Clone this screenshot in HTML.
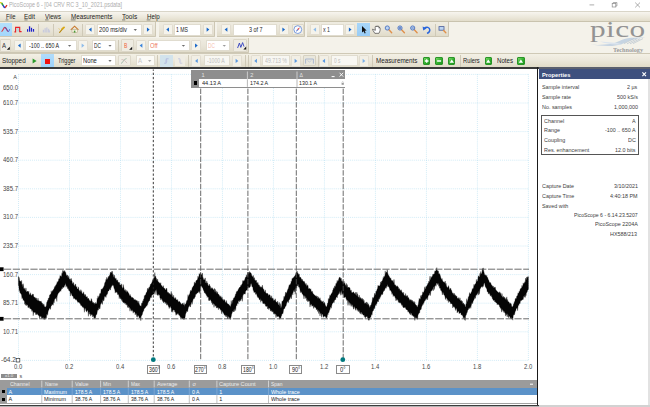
<!DOCTYPE html>
<html><head><meta charset="utf-8"><title>PicoScope 6</title>
<style>
html,body{margin:0;padding:0;background:#fff;}
#app{position:relative;width:650px;height:407px;overflow:hidden;background:#fff;font-family:"Liberation Sans",sans-serif;}
#app div,#app span,#app svg{position:absolute;display:block;white-space:pre;box-sizing:border-box;}
#app svg{overflow:visible}
</style></head><body><div id="app">
<div style="left:0.00px;top:0.00px;width:650.00px;height:10.60px;background:#ffffff;"></div>
<div style="left:0.00px;top:10.60px;width:650.00px;height:11.20px;background:linear-gradient(#f7f5ef,#ebe7da 60%,#e2ddcb);border-top:0.6px solid #d9d5c8;border-bottom:0.7px solid #c9c3ae;"></div>
<div style="left:0.00px;top:21.80px;width:650.00px;height:32.00px;background:#f4f2ea;"></div>
<div style="left:0.00px;top:53.40px;width:650.00px;height:13.80px;background:linear-gradient(#f3f0e5,#ebe7da 50%,#e0dbc8);border-top:0.7px solid #cfc9b6;"></div>
<div style="left:0.00px;top:67.40px;width:538.50px;height:1.60px;background:#3a3a3a;"></div>
<div style="left:538.50px;top:67.40px;width:111.50px;height:1.60px;background:#5a5f6e;"></div>
<div style="left:0.00px;top:21.80px;width:156.30px;height:15.50px;background:linear-gradient(#efece1,#e9e5d8 55%,#e0dbc9);border-right:0.7px solid #cdc7b4;border-bottom:0.7px solid #cdc7b4;border-radius:0 0 1.5px 0;"></div>
<div style="left:158.60px;top:21.80px;width:56.10px;height:15.50px;background:linear-gradient(#efece1,#e9e5d8 55%,#e0dbc9);border-right:0.7px solid #cdc7b4;border-bottom:0.7px solid #cdc7b4;border-radius:0 0 1.5px 0;"></div>
<div style="left:217.30px;top:21.80px;width:87.70px;height:15.50px;background:linear-gradient(#efece1,#e9e5d8 55%,#e0dbc9);border-right:0.7px solid #cdc7b4;border-bottom:0.7px solid #cdc7b4;border-radius:0 0 1.5px 0;"></div>
<div style="left:307.00px;top:21.80px;width:142.30px;height:15.50px;background:linear-gradient(#efece1,#e9e5d8 55%,#e0dbc9);border-right:0.7px solid #cdc7b4;border-bottom:0.7px solid #cdc7b4;border-radius:0 0 1.5px 0;"></div>
<div style="left:0.00px;top:38.20px;width:248.80px;height:14.80px;background:linear-gradient(#efece1,#e9e5d8 55%,#e0dbc9);border-right:0.7px solid #cdc7b4;border-bottom:0.7px solid #cdc7b4;border-radius:0 0 1.5px 0;"></div>
<svg style="left:0.00px;top:0.00px" width="650" height="407" viewBox="0 0 650 407"><path d="M0,2.9 C0.8,2.5 1.3,2.7 1.8,3.4" fill="none" stroke="#e6d21e" stroke-width="1.5"/><path d="M1.6,3.1 C2.3,3.8 2.7,4.6 3.2,5.6" fill="none" stroke="#35a030" stroke-width="1.5"/><path d="M3.0,5.2 C3.6,6.6 4.2,7.6 5.2,7.4" fill="none" stroke="#2438cc" stroke-width="1.5"/><path d="M5.0,7.5 C5.8,7.2 6.3,6.2 6.9,5.0" fill="none" stroke="#d83224" stroke-width="1.4"/></svg>
<span style='left:8.80px;top:-0.40px;font-size:6.80px;line-height:10px;color:#adadad;font-weight:400;font-family:"Liberation Sans", sans-serif;transform-origin:0 50%;transform:scaleX(0.799);'>PicoScope 6 - [04 CRV RC 3_10_2021.psdata]</span>
<svg style="left:0.00px;top:0.00px" width="650" height="407" viewBox="0 0 650 407"><g stroke="#8a8a8a" stroke-width="0.7" fill="none"><path d="M589.5,4.9 H594.2"/><rect x="612.2" y="3.4" width="3.6" height="3.6"/><path d="M613.3,3.4 V2.5 H616.9 V6 H615.8"/><path d="M635.2,2.6 L640,7.4 M640,2.6 L635.2,7.4"/></g></svg>
<span style='left:5.50px;top:11.50px;font-size:6.90px;line-height:10px;color:#1c1c1c;font-weight:400;font-family:"Liberation Sans", sans-serif;transform-origin:0 50%;transform:scaleX(0.854);'>File</span>
<span style='left:24.30px;top:11.50px;font-size:6.90px;line-height:10px;color:#1c1c1c;font-weight:400;font-family:"Liberation Sans", sans-serif;transform-origin:0 50%;transform:scaleX(0.917);'>Edit</span>
<span style='left:45.00px;top:11.50px;font-size:6.90px;line-height:10px;color:#1c1c1c;font-weight:400;font-family:"Liberation Sans", sans-serif;transform-origin:0 50%;transform:scaleX(0.875);'>Views</span>
<span style='left:70.70px;top:11.50px;font-size:6.90px;line-height:10px;color:#1c1c1c;font-weight:400;font-family:"Liberation Sans", sans-serif;transform-origin:0 50%;transform:scaleX(0.905);'>Measurements</span>
<span style='left:122.00px;top:11.50px;font-size:6.90px;line-height:10px;color:#1c1c1c;font-weight:400;font-family:"Liberation Sans", sans-serif;transform-origin:0 50%;transform:scaleX(0.944);'>Tools</span>
<span style='left:146.60px;top:11.50px;font-size:6.90px;line-height:10px;color:#1c1c1c;font-weight:400;font-family:"Liberation Sans", sans-serif;transform-origin:0 50%;transform:scaleX(0.902);'>Help</span>
<svg style="left:0.00px;top:0.00px" width="650" height="407" viewBox="0 0 650 407"><g stroke="#1c1c1c" stroke-width="0.5"><path d="M5.6,19.9 H8.4"/><path d="M24.4,19.9 H27.6"/><path d="M45.1,19.9 H48.6"/><path d="M70.8,19.9 H75.6"/><path d="M122.1,19.9 H125.3"/><path d="M146.7,19.9 H150.4"/></g></svg>
<div style="left:0.00px;top:22.60px;width:11.70px;height:13.80px;background:linear-gradient(#b4e0fc,#a2d6fb);"></div>
<svg style="left:0.00px;top:0.00px" width="650" height="407" viewBox="0 0 650 407"><path d="M1.4,31.5 C2.9,31.5 3.4,27.3 4.9,27.3 C6.4,27.3 6.9,31.4 8.3,31.4" fill="none" stroke="#e0424a" stroke-width="1.15"/><path d="M4.6,27.5 C6.5,27.3 7,31.6 8.5,31.5 C9,31.4 9.2,30.4 9.6,29.3" fill="none" stroke="#3a4ad0" stroke-width="1.0" opacity="0.85"/></svg>
<svg style="left:0.00px;top:0.00px" width="650" height="407" viewBox="0 0 650 407"><path d="M14.4,31.8 H15.6 V27.4 H19.7 V31.6 H21.6" fill="none" stroke="#e8222a" stroke-width="1.15"/><path d="M17,31.6 V28.6 H18.4 V31.6" fill="none" stroke="#9ad0e0" stroke-width="0.7"/></svg>
<svg style="left:0.00px;top:0.00px" width="650" height="407" viewBox="0 0 650 407"><g fill="#1c20cc"><rect x="27" y="29.2" width="1.1" height="2.5"/><rect x="28.9" y="26.3" width="1.3" height="5.4"/><rect x="30.9" y="27.8" width="1.2" height="3.9"/><rect x="32.9" y="29" width="1.2" height="2.7"/></g></svg>
<div style="left:37.60px;top:23.50px;width:0.80px;height:12.50px;background:#cfc9b7;"></div>
<svg style="left:0.00px;top:0.00px" width="650" height="407" viewBox="0 0 650 407"><g fill="#c9cbdc"><rect x="42.8" y="29.8" width="1.3" height="2.7"/><rect x="44.5" y="28.2" width="1.3" height="4.3"/><rect x="46.2" y="27.4" width="1.3" height="5.1"/><rect x="47.9" y="28.8" width="1.3" height="3.7"/><rect x="49" y="30.4" width="1.1" height="2.1"/></g></svg>
<div style="left:53.20px;top:23.50px;width:0.80px;height:12.50px;background:#cfc9b7;"></div>
<svg style="left:0.00px;top:0.00px" width="650" height="407" viewBox="0 0 650 407"><path d="M59.6,32.4 L62.6,28.8" stroke="#b8860a" stroke-width="1.1" stroke-linecap="round"/><path d="M62.2,29 L64,27.4" stroke="#d8a818" stroke-width="1.9" stroke-linecap="round"/><path d="M58.6,28.6 L59.8,29.4" stroke="#e0b020" stroke-width="0.6"/></svg>
<svg style="left:0.00px;top:0.00px" width="650" height="407" viewBox="0 0 650 407"><path d="M70.8,29.8 L74.6,26.2 L78.4,29.8" fill="none" stroke="#c8782a" stroke-width="1.1"/><rect x="72" y="29.4" width="5.2" height="3.2" fill="#fbf6e6" stroke="#a89a70" stroke-width="0.5"/><rect x="73.8" y="30.6" width="1.6" height="2" fill="#4a9a3a"/></svg>
<div style="left:81.60px;top:23.50px;width:0.80px;height:12.50px;background:#cfc9b7;"></div>
<div style="left:85.10px;top:23.85px;width:10.20px;height:11.50px;background:#f5f3eb;border:0.5px solid #e2ddd0;border-radius:1.2px;"></div>
<svg style="left:0.00px;top:0.00px" width="650" height="407" viewBox="0 0 650 407"><polygon points="91.55,27.5 91.55,31.700000000000003 88.85000000000001,29.6" fill="#1565c8"/></svg>
<div style="left:96.80px;top:24.00px;width:45.00px;height:11.60px;background:#ffffff;border:0.5px solid #e0dccf;"></div>
<svg style="left:0.00px;top:0.00px" width="650" height="407" viewBox="0 0 650 407"><polygon points="133.65,29.1 136.95000000000002,29.1 135.3,30.9" fill="#6e6e6e"/></svg>
<span style='left:99.00px;top:24.60px;font-size:6.60px;line-height:10px;color:#222;font-weight:400;font-family:"Liberation Sans", sans-serif;transform-origin:0 50%;transform:scaleX(0.877);'>200 ms/div</span>
<div style="left:143.20px;top:23.85px;width:10.20px;height:11.50px;background:#f5f3eb;border:0.5px solid #e2ddd0;border-radius:1.2px;"></div>
<svg style="left:0.00px;top:0.00px" width="650" height="407" viewBox="0 0 650 407"><polygon points="146.95000000000002,27.5 146.95000000000002,31.700000000000003 149.65,29.6" fill="#1565c8"/></svg>
<div style="left:162.50px;top:23.85px;width:10.20px;height:11.50px;background:#f5f3eb;border:0.5px solid #e2ddd0;border-radius:1.2px;"></div>
<svg style="left:0.00px;top:0.00px" width="650" height="407" viewBox="0 0 650 407"><polygon points="168.95,27.5 168.95,31.700000000000003 166.25,29.6" fill="#1565c8"/></svg>
<div style="left:173.80px;top:24.00px;width:27.50px;height:11.60px;background:#ffffff;border:0.5px solid #e0dccf;"></div>
<span style='left:176.00px;top:24.60px;font-size:6.60px;line-height:10px;color:#222;font-weight:400;font-family:"Liberation Sans", sans-serif;transform-origin:0 50%;transform:scaleX(0.779);'>1 MS</span>
<div style="left:202.90px;top:23.85px;width:10.20px;height:11.50px;background:#f5f3eb;border:0.5px solid #e2ddd0;border-radius:1.2px;"></div>
<svg style="left:0.00px;top:0.00px" width="650" height="407" viewBox="0 0 650 407"><polygon points="206.65,27.5 206.65,31.700000000000003 209.35,29.6" fill="#1565c8"/></svg>
<div style="left:220.90px;top:23.85px;width:10.20px;height:11.50px;background:#f5f3eb;border:0.5px solid #e2ddd0;border-radius:1.2px;"></div>
<svg style="left:0.00px;top:0.00px" width="650" height="407" viewBox="0 0 650 407"><polygon points="227.35,27.5 227.35,31.700000000000003 224.65,29.6" fill="#1565c8"/></svg>
<div style="left:232.80px;top:24.00px;width:44.50px;height:11.60px;background:#ffffff;border:0.5px solid #e0dccf;"></div>
<span style='left:248.50px;top:24.60px;font-size:6.60px;line-height:10px;color:#222;font-weight:400;font-family:"Liberation Sans", sans-serif;transform-origin:0 50%;transform:scaleX(0.818);'>3 of 7</span>
<div style="left:278.60px;top:23.85px;width:10.20px;height:11.50px;background:#f5f3eb;border:0.5px solid #e2ddd0;border-radius:1.2px;"></div>
<svg style="left:0.00px;top:0.00px" width="650" height="407" viewBox="0 0 650 407"><polygon points="282.34999999999997,27.5 282.34999999999997,31.700000000000003 285.05,29.6" fill="#1565c8"/></svg>
<div style="left:291.60px;top:23.80px;width:12.00px;height:11.60px;background:#f1eee4;border:0.6px solid #dcd7c8;border-radius:1px;"></div>
<svg style="left:0.00px;top:0.00px" width="650" height="407" viewBox="0 0 650 407"><circle cx="297.8" cy="29.6" r="3.9" fill="#fdfdfd" stroke="#5a86d8" stroke-width="0.8"/><path d="M295.6,31.9 L297.3,29.0 L298.4,30.1 Z" fill="#4a6ad0"/><path d="M300.1,27.2 L297.3,29.0 L298.4,30.1 Z" fill="#e03030"/></svg>
<div style="left:309.60px;top:23.85px;width:10.20px;height:11.50px;background:#f5f3eb;border:0.5px solid #e2ddd0;border-radius:1.2px;"></div>
<svg style="left:0.00px;top:0.00px" width="650" height="407" viewBox="0 0 650 407"><polygon points="316.05,27.5 316.05,31.700000000000003 313.34999999999997,29.6" fill="#8fbdea"/></svg>
<div style="left:320.80px;top:24.00px;width:23.20px;height:11.60px;background:#ffffff;border:0.5px solid #e0dccf;"></div>
<span style='left:323.00px;top:24.60px;font-size:6.60px;line-height:10px;color:#333;font-weight:400;font-family:"Liberation Sans", sans-serif;transform-origin:0 50%;transform:scaleX(0.795);'>x 1</span>
<div style="left:345.10px;top:23.85px;width:10.20px;height:11.50px;background:#f5f3eb;border:0.5px solid #e2ddd0;border-radius:1.2px;"></div>
<svg style="left:0.00px;top:0.00px" width="650" height="407" viewBox="0 0 650 407"><polygon points="348.84999999999997,27.5 348.84999999999997,31.700000000000003 351.55,29.6" fill="#1565c8"/></svg>
<div style="left:357.30px;top:23.00px;width:12.70px;height:13.40px;background:linear-gradient(#a8d6f8,#98ccf6);"></div>
<svg style="left:0.00px;top:0.00px" width="650" height="407" viewBox="0 0 650 407"><path d="M362,26 L362,32.6 L363.6,31.2 L364.7,33.6 L365.7,33.1 L364.6,30.8 L366.6,30.6 Z" fill="#111"/></svg>
<svg style="left:0.00px;top:0.00px" width="650" height="407" viewBox="0 0 650 407"><path transform="translate(376.4 29.8) scale(0.88) translate(-376.4 -29.6)" d="M373.3,29.4 C372.2,28.2 371.4,28.8 372.6,30.4 L374.6,33.6 L379.2,33.6 C380.6,31.4 380.8,29.6 380.6,27.6 C380.4,26.6 379.4,26.8 379.4,27.8 L379.3,26.2 C379.1,25.2 378,25.4 378,26.4 L377.8,25.6 C377.5,24.6 376.4,24.9 376.5,26 L376.3,26.4 C376,25.3 374.8,25.6 375,26.8 L375.2,30.2 Z" fill="#fff" stroke="#222" stroke-width="0.65"/></svg>
<svg style="left:0.00px;top:0.00px" width="650" height="407" viewBox="0 0 650 407"><path d="M388.7,29.6 L391.7,32.8" stroke="#e0904a" stroke-width="1.4" stroke-linecap="round"/><circle cx="387.3" cy="28.0" r="2.1" fill="#bcd4f2" stroke="#4a72c0" stroke-width="0.9"/><path d="M401.4,29.6 L404.4,32.8" stroke="#e0904a" stroke-width="1.4" stroke-linecap="round"/><circle cx="400.0" cy="28.0" r="2.1" fill="#bcd4f2" stroke="#4a72c0" stroke-width="0.9"/><path d="M398.9,28.0 H401.1" stroke="#2a4aa0" stroke-width="0.6"/><path d="M400.0,26.9 V29.1" stroke="#2a4aa0" stroke-width="0.6"/><path d="M414.09999999999997,29.6 L417.09999999999997,32.8" stroke="#e0904a" stroke-width="1.4" stroke-linecap="round"/><circle cx="412.7" cy="28.0" r="2.1" fill="#bcd4f2" stroke="#4a72c0" stroke-width="0.9"/><path d="M411.59999999999997,28.0 H413.8" stroke="#2a4aa0" stroke-width="0.6"/></svg>
<svg style="left:0.00px;top:0.00px" width="650" height="407" viewBox="0 0 650 407"><path d="M424.4,28.4 C426.4,26.4 429.8,27.2 429.8,30 C429.8,31.8 428.6,32.8 427,33.4" fill="none" stroke="#2a66dc" stroke-width="1.5"/><path d="M422.6,26.4 L423.2,30.6 L426.6,28.6 Z" fill="#2a66dc"/></svg>
<div style="left:434.80px;top:23.50px;width:0.80px;height:12.50px;background:#cfc9b7;"></div>
<svg style="left:0.00px;top:0.00px" width="650" height="407" viewBox="0 0 650 407"><rect x="439" y="26.6" width="5" height="3.6" fill="#bcd4f2" stroke="#4a5e98" stroke-width="0.8"/><path d="M443.6,30.6 L445.8,32.8" stroke="#e0904a" stroke-width="1.4" stroke-linecap="round"/></svg>
<span style='left:590.30px;top:24.60px;font-size:23.00px;line-height:10px;color:#939393;font-weight:400;font-family:"Liberation Serif", serif;transform-origin:0 50%;transform:scaleX(1.360);letter-spacing:0.3px;'>pico</span>
<svg style="left:0.00px;top:0.00px" width="650" height="407" viewBox="0 0 650 407"><path d="M590,44.6 C602,45.4 612,44.6 620,40.8 C627,37.6 634,37.4 645.5,37.6 C636,38.6 630,40.2 624.5,43 C616,47 604,46.6 590,44.6 Z" fill="#c6d4e2"/><path d="M600,41.6 C608,42.2 616,42.6 622,44.2 C614,45.2 606,43.8 600,41.6 Z" fill="#dbe4ee"/><path d="M624,43.6 L634,38.6 M627,43.8 L637,38.8 M630,43.8 L640,38.8 M633,43.6 L643,38.6" stroke="#b9c4d0" stroke-width="0.7"/></svg>
<span style='left:613.00px;top:44.50px;font-size:5.60px;line-height:10px;color:#9a9a9a;font-weight:700;font-family:"Liberation Serif", serif;transform-origin:0 50%;transform:scaleX(1.104);'>Technology</span>
<div style="left:0.40px;top:39.20px;width:10.80px;height:12.40px;background:#efece2;border:0.6px solid #dcd7c8;border-radius:1px;"></div>
<span style='left:2.00px;top:40.60px;font-size:6.60px;line-height:10px;color:#333;font-weight:400;font-family:"Liberation Sans", sans-serif;transform-origin:0 50%;transform:scaleX(0.920);'>A</span>
<svg style="left:0.00px;top:0.00px" width="650" height="407" viewBox="0 0 650 407"><path d="M9.8,46.8 V49.8 H6.8 Z" fill="#111"/></svg>
<div style="left:14.20px;top:39.85px;width:10.20px;height:11.50px;background:#f5f3eb;border:0.5px solid #e2ddd0;border-radius:1.2px;"></div>
<svg style="left:0.00px;top:0.00px" width="650" height="407" viewBox="0 0 650 407"><polygon points="20.650000000000002,43.5 20.650000000000002,47.7 17.95,45.6" fill="#1565c8"/></svg>
<div style="left:25.40px;top:40.00px;width:51.80px;height:11.20px;background:#ffffff;border:0.5px solid #e0dccf;"></div>
<svg style="left:0.00px;top:0.00px" width="650" height="407" viewBox="0 0 650 407"><polygon points="67.94999999999999,44.900000000000006 71.25,44.900000000000006 69.6,46.7" fill="#6e6e6e"/></svg>
<span style='left:28.60px;top:40.60px;font-size:6.60px;line-height:10px;color:#222;font-weight:400;font-family:"Liberation Sans", sans-serif;transform-origin:0 50%;transform:scaleX(0.804);'>-100 .. 650 A</span>
<div style="left:77.90px;top:39.85px;width:10.20px;height:11.50px;background:#f5f3eb;border:0.5px solid #e2ddd0;border-radius:1.2px;"></div>
<svg style="left:0.00px;top:0.00px" width="650" height="407" viewBox="0 0 650 407"><polygon points="81.65,43.5 81.65,47.7 84.35,45.6" fill="#8fbdea"/></svg>
<div style="left:91.60px;top:40.00px;width:24.40px;height:11.20px;background:#ffffff;border:0.5px solid #e0dccf;"></div>
<svg style="left:0.00px;top:0.00px" width="650" height="407" viewBox="0 0 650 407"><polygon points="108.35,44.900000000000006 111.65,44.900000000000006 110,46.7" fill="#6e6e6e"/></svg>
<span style='left:93.90px;top:40.60px;font-size:6.60px;line-height:10px;color:#222;font-weight:400;font-family:"Liberation Sans", sans-serif;transform-origin:0 50%;transform:scaleX(0.720);'>DC</span>
<div style="left:118.40px;top:39.50px;width:0.80px;height:12.50px;background:#cfc9b7;"></div>
<div style="left:120.60px;top:39.20px;width:13.00px;height:12.40px;background:#efece2;border:0.6px solid #dcd7c8;border-radius:1px;"></div>
<span style='left:124.00px;top:40.60px;font-size:6.40px;line-height:10px;color:#f08c6c;font-weight:700;font-family:"Liberation Sans", sans-serif;transform-origin:0 50%;transform:scaleX(0.720);'>B</span>
<svg style="left:0.00px;top:0.00px" width="650" height="407" viewBox="0 0 650 407"><path d="M132.2,46.8 V49.8 H129.2 Z" fill="#111"/></svg>
<div style="left:135.90px;top:39.85px;width:10.20px;height:11.50px;background:#f5f3eb;border:0.5px solid #e2ddd0;border-radius:1.2px;"></div>
<svg style="left:0.00px;top:0.00px" width="650" height="407" viewBox="0 0 650 407"><polygon points="142.35,43.5 142.35,47.7 139.65,45.6" fill="#3a84dc"/></svg>
<div style="left:147.60px;top:40.00px;width:42.20px;height:11.20px;background:#ffffff;border:0.5px solid #e0dccf;"></div>
<svg style="left:0.00px;top:0.00px" width="650" height="407" viewBox="0 0 650 407"><polygon points="181.75,44.900000000000006 185.05,44.900000000000006 183.4,46.7" fill="#6e6e6e"/></svg>
<span style='left:150.20px;top:40.60px;font-size:6.60px;line-height:10px;color:#ee7a5c;font-weight:400;font-family:"Liberation Sans", sans-serif;transform-origin:0 50%;transform:scaleX(0.875);'>Off</span>
<div style="left:191.30px;top:39.85px;width:10.20px;height:11.50px;background:#f5f3eb;border:0.5px solid #e2ddd0;border-radius:1.2px;"></div>
<svg style="left:0.00px;top:0.00px" width="650" height="407" viewBox="0 0 650 407"><polygon points="195.05,43.5 195.05,47.7 197.75,45.6" fill="#1565c8"/></svg>
<div style="left:206.20px;top:40.00px;width:24.20px;height:11.20px;background:#ffffff;border:0.5px solid #e0dccf;"></div>
<svg style="left:0.00px;top:0.00px" width="650" height="407" viewBox="0 0 650 407"><polygon points="222.65,44.900000000000006 225.95000000000002,44.900000000000006 224.3,46.7" fill="#9a9a9a"/></svg>
<span style='left:208.00px;top:40.60px;font-size:6.60px;line-height:10px;color:#f5c0b0;font-weight:400;font-family:"Liberation Sans", sans-serif;transform-origin:0 50%;transform:scaleX(0.720);'>DC</span>
<div style="left:233.30px;top:39.20px;width:14.20px;height:12.40px;background:#efece2;border:0.6px solid #dcd7c8;border-radius:1px;"></div>
<svg style="left:0.00px;top:0.00px" width="650" height="407" viewBox="0 0 650 407"><path d="M237.6,48 L239.4,43 L240.8,47.4 L242.6,42.6 L244,46.6" fill="none" stroke="#3040c0" stroke-width="0.9"/><path d="M246.2,46.6 V49.4 H243.4 Z" fill="#111"/></svg>
<span style='left:1.70px;top:55.90px;font-size:6.60px;line-height:10px;color:#222;font-weight:400;font-family:"Liberation Sans", sans-serif;transform-origin:0 50%;transform:scaleX(0.964);'>Stopped</span>
<svg style="left:0.00px;top:0.00px" width="650" height="407" viewBox="0 0 650 407"><polygon points="32.6,58.4 32.6,63.6 36.6,61" fill="#2a9a2a"/></svg>
<div style="left:40.60px;top:54.20px;width:13.40px;height:12.90px;background:linear-gradient(#b0dcfb,#9ed2fa);"></div>
<div style="left:44.60px;top:58.50px;width:5.00px;height:5.00px;background:#f01010;"></div>
<span style='left:57.50px;top:55.90px;font-size:6.60px;line-height:10px;color:#222;font-weight:400;font-family:"Liberation Sans", sans-serif;transform-origin:0 50%;transform:scaleX(0.847);'>Trigger</span>
<div style="left:80.60px;top:55.20px;width:35.40px;height:11.20px;background:#ffffff;border:0.5px solid #e0dccf;"></div>
<svg style="left:0.00px;top:0.00px" width="650" height="407" viewBox="0 0 650 407"><polygon points="108.35,60.10000000000001 111.65,60.10000000000001 110,61.900000000000006" fill="#6e6e6e"/></svg>
<span style='left:82.60px;top:55.90px;font-size:6.60px;line-height:10px;color:#222;font-weight:400;font-family:"Liberation Sans", sans-serif;transform-origin:0 50%;transform:scaleX(0.875);'>None</span>
<div style="left:118.20px;top:55.20px;width:12.40px;height:11.20px;background:#f0ede4;border:0.5px solid #ddd8ca;border-radius:1px;"></div>
<svg style="left:0.00px;top:0.00px" width="650" height="407" viewBox="0 0 650 407"><path d="M121,63.4 C123,63.4 123.4,58.6 126.6,58.6" fill="none" stroke="#a0b8a8" stroke-width="0.9"/><path d="M121.4,59.6 C123.6,59.2 125.4,61 127,63.2" fill="none" stroke="#c8b0b0" stroke-width="0.7"/></svg>
<div style="left:135.80px;top:55.20px;width:18.80px;height:11.20px;background:#fbfaf6;border:0.5px solid #e0dccf;"></div>
<svg style="left:0.00px;top:0.00px" width="650" height="407" viewBox="0 0 650 407"><polygon points="148.04999999999998,60.10000000000001 151.35,60.10000000000001 149.7,61.900000000000006" fill="#aaa"/></svg>
<span style='left:138.20px;top:55.90px;font-size:6.60px;line-height:10px;color:#c8c8c8;font-weight:400;font-family:"Liberation Sans", sans-serif;transform-origin:0 50%;transform:scaleX(0.920);'>A</span>
<div style="left:157.00px;top:55.00px;width:0.80px;height:11.50px;background:#cfc9b7;"></div>
<div style="left:159.80px;top:54.80px;width:13.20px;height:12.00px;background:#d2e3ec;"></div>
<svg style="left:0.00px;top:0.00px" width="650" height="407" viewBox="0 0 650 407"><path d="M164.2,63.2 H166.2 V58.8 H168.6" fill="none" stroke="#a9aedc" stroke-width="0.7"/><path d="M165.2,61 H167.4" stroke="#b4b8e0" stroke-width="0.5"/></svg>
<div style="left:174.60px;top:55.20px;width:10.60px;height:11.20px;background:#efece3;"></div>
<svg style="left:0.00px;top:0.00px" width="650" height="407" viewBox="0 0 650 407"><path d="M178,58.8 H180 V63.2 H182.4" fill="none" stroke="#bcc0dc" stroke-width="0.7"/><path d="M179,61 H181.2" stroke="#c4c8e0" stroke-width="0.5"/></svg>
<div style="left:187.50px;top:55.00px;width:0.80px;height:11.50px;background:#cfc9b7;"></div>
<div style="left:191.30px;top:55.15px;width:10.20px;height:11.50px;background:#f2efe5;border:0.5px solid #e2ddd0;border-radius:1.2px;"></div>
<svg style="left:0.00px;top:0.00px" width="650" height="407" viewBox="0 0 650 407"><polygon points="197.75,58.8 197.75,63.0 195.05,60.9" fill="#5a98e0"/></svg>
<div style="left:203.60px;top:55.20px;width:26.70px;height:11.20px;background:#f8f7f2;border:0.5px solid #e0dccf;"></div>
<span style='left:206.70px;top:55.90px;font-size:6.60px;line-height:10px;color:#bdbdbd;font-weight:400;font-family:"Liberation Sans", sans-serif;transform-origin:0 50%;transform:scaleX(0.774);'>-1000 A</span>
<div style="left:231.90px;top:55.15px;width:10.20px;height:11.50px;background:#f2efe5;border:0.5px solid #e2ddd0;border-radius:1.2px;"></div>
<svg style="left:0.00px;top:0.00px" width="650" height="407" viewBox="0 0 650 407"><polygon points="235.65,58.8 235.65,63.0 238.35,60.9" fill="#5a98e0"/></svg>
<div style="left:245.00px;top:55.00px;width:0.80px;height:11.50px;background:#cfc9b7;"></div>
<div style="left:248.20px;top:55.00px;width:0.80px;height:11.50px;background:#cfc9b7;"></div>
<div style="left:250.50px;top:55.15px;width:10.20px;height:11.50px;background:#f2efe5;border:0.5px solid #e2ddd0;border-radius:1.2px;"></div>
<svg style="left:0.00px;top:0.00px" width="650" height="407" viewBox="0 0 650 407"><polygon points="256.95,58.8 256.95,63.0 254.25,60.9" fill="#5a98e0"/></svg>
<div style="left:262.30px;top:55.20px;width:27.50px;height:11.20px;background:#f8f7f2;border:0.5px solid #e0dccf;"></div>
<span style='left:265.40px;top:55.90px;font-size:6.60px;line-height:10px;color:#bdbdbd;font-weight:400;font-family:"Liberation Sans", sans-serif;transform-origin:0 50%;transform:scaleX(0.789);'>49.713 %</span>
<div style="left:290.90px;top:55.15px;width:10.20px;height:11.50px;background:#f2efe5;border:0.5px solid #e2ddd0;border-radius:1.2px;"></div>
<svg style="left:0.00px;top:0.00px" width="650" height="407" viewBox="0 0 650 407"><polygon points="294.65,58.8 294.65,63.0 297.35,60.9" fill="#5a98e0"/></svg>
<div style="left:302.80px;top:55.20px;width:13.60px;height:11.20px;background:#e9e7dc;border:0.6px solid #d6d1c1;border-radius:1px;"></div>
<svg style="left:0.00px;top:0.00px" width="650" height="407" viewBox="0 0 650 407"><path d="M305.6,63.6 V59 H313.4 V63.6" fill="none" stroke="#9aaccc" stroke-width="0.8"/><path d="M307.4,60.6 L309.6,62 L311.6,60.2" fill="none" stroke="#b0bcd4" stroke-width="0.6"/></svg>
<div style="left:318.20px;top:55.00px;width:0.80px;height:11.50px;background:#cfc9b7;"></div>
<div style="left:318.60px;top:55.15px;width:10.20px;height:11.50px;background:#f2efe5;border:0.5px solid #e2ddd0;border-radius:1.2px;"></div>
<svg style="left:0.00px;top:0.00px" width="650" height="407" viewBox="0 0 650 407"><polygon points="325.05,58.8 325.05,63.0 322.34999999999997,60.9" fill="#5a98e0"/></svg>
<div style="left:330.60px;top:55.20px;width:27.60px;height:11.20px;background:#f8f7f2;border:0.5px solid #e0dccf;"></div>
<span style='left:333.80px;top:55.90px;font-size:6.60px;line-height:10px;color:#bdbdbd;font-weight:400;font-family:"Liberation Sans", sans-serif;transform-origin:0 50%;transform:scaleX(0.720);'>0 s</span>
<div style="left:358.90px;top:55.15px;width:10.20px;height:11.50px;background:#f2efe5;border:0.5px solid #e2ddd0;border-radius:1.2px;"></div>
<svg style="left:0.00px;top:0.00px" width="650" height="407" viewBox="0 0 650 407"><polygon points="362.65,58.8 362.65,63.0 365.35,60.9" fill="#7ab0e8"/></svg>
<div style="left:372.00px;top:55.00px;width:0.80px;height:11.50px;background:#cfc9b7;"></div>
<span style='left:376.40px;top:55.90px;font-size:6.60px;line-height:10px;color:#222;font-weight:400;font-family:"Liberation Sans", sans-serif;transform-origin:0 50%;transform:scaleX(0.951);'>Measurements</span>
<div style="left:423.00px;top:57.40px;width:7.40px;height:7.20px;background:linear-gradient(135deg,#7ad868,#2fae2c 55%,#1f9420);border:0.5px solid #2a9428;border-radius:1px;"></div>
<svg style="left:0.00px;top:0.00px" width="650" height="407" viewBox="0 0 650 407"><path d="M424.9,61.0 H428.5 M426.7,59.199999999999996 V62.8" stroke="#fff" stroke-width="1.3"/></svg>
<div style="left:435.40px;top:57.40px;width:7.40px;height:7.20px;background:linear-gradient(135deg,#7ad868,#2fae2c 55%,#1f9420);border:0.5px solid #2a9428;border-radius:1px;"></div>
<svg style="left:0.00px;top:0.00px" width="650" height="407" viewBox="0 0 650 407"><path d="M437.09999999999997,61.0 H441.09999999999997" stroke="#fff" stroke-width="1.5"/></svg>
<div style="left:448.10px;top:57.40px;width:7.40px;height:7.20px;background:linear-gradient(135deg,#7ad868,#2fae2c 55%,#1f9420);border:0.5px solid #2a9428;border-radius:1px;"></div>
<svg style="left:0.00px;top:0.00px" width="650" height="407" viewBox="0 0 650 407"><path d="M449.6,62.8 L451.8,59.4 L454.0,62.8 Z" fill="#fff"/></svg>
<div style="left:459.60px;top:55.00px;width:0.80px;height:11.50px;background:#cfc9b7;"></div>
<span style='left:462.70px;top:55.90px;font-size:6.60px;line-height:10px;color:#222;font-weight:400;font-family:"Liberation Sans", sans-serif;transform-origin:0 50%;transform:scaleX(0.876);'>Rulers</span>
<div style="left:484.60px;top:57.40px;width:7.40px;height:7.20px;background:linear-gradient(135deg,#7ad868,#2fae2c 55%,#1f9420);border:0.5px solid #2a9428;border-radius:1px;"></div>
<svg style="left:0.00px;top:0.00px" width="650" height="407" viewBox="0 0 650 407"><path d="M486.1,62.8 L488.3,59.4 L490.5,62.8 Z" fill="#fff"/></svg>
<span style='left:497.40px;top:55.90px;font-size:6.60px;line-height:10px;color:#222;font-weight:400;font-family:"Liberation Sans", sans-serif;transform-origin:0 50%;transform:scaleX(0.928);'>Notes</span>
<div style="left:517.20px;top:57.40px;width:7.40px;height:7.20px;background:linear-gradient(135deg,#7ad868,#2fae2c 55%,#1f9420);border:0.5px solid #2a9428;border-radius:1px;"></div>
<svg style="left:0.00px;top:0.00px" width="650" height="407" viewBox="0 0 650 407"><path d="M518.7,62.8 L520.9000000000001,59.4 L523.1,62.8 Z" fill="#fff"/></svg>
<div style="left:0.00px;top:69.00px;width:537.00px;height:335.60px;background:#ffffff;"></div>
<div style="left:536.70px;top:67.40px;width:1.80px;height:338.60px;background:#1a1a1a;"></div>
<svg style="left:0.00px;top:0.00px" width="650" height="407" viewBox="0 0 650 407"><g stroke="#a6d8ee" stroke-width="0.6" stroke-dasharray="0.8 1.15" fill="none"><path d="M18.50,74.4 V360.4"/><path d="M18.5,74.40 H528.4"/><path d="M69.49,74.4 V360.4"/><path d="M18.5,103.00 H528.4"/><path d="M120.48,74.4 V360.4"/><path d="M18.5,131.60 H528.4"/><path d="M171.47,74.4 V360.4"/><path d="M18.5,160.20 H528.4"/><path d="M222.46,74.4 V360.4"/><path d="M18.5,188.80 H528.4"/><path d="M273.45,74.4 V360.4"/><path d="M18.5,217.40 H528.4"/><path d="M324.44,74.4 V360.4"/><path d="M18.5,246.00 H528.4"/><path d="M375.43,74.4 V360.4"/><path d="M18.5,274.60 H528.4"/><path d="M426.42,74.4 V360.4"/><path d="M18.5,303.20 H528.4"/><path d="M477.41,74.4 V360.4"/><path d="M18.5,331.80 H528.4"/><path d="M528.40,74.4 V360.4"/><path d="M18.5,360.40 H528.4"/></g></svg>
<span style='left:3.20px;top:83.00px;font-size:6.50px;line-height:10px;color:#474747;font-weight:400;font-family:"Liberation Sans", sans-serif;transform-origin:0 50%;transform:scaleX(0.922);'>650.0</span>
<span style='left:3.20px;top:98.00px;font-size:6.50px;line-height:10px;color:#474747;font-weight:400;font-family:"Liberation Sans", sans-serif;transform-origin:0 50%;transform:scaleX(0.922);'>610.7</span>
<span style='left:3.20px;top:126.60px;font-size:6.50px;line-height:10px;color:#474747;font-weight:400;font-family:"Liberation Sans", sans-serif;transform-origin:0 50%;transform:scaleX(0.922);'>535.7</span>
<span style='left:3.20px;top:155.20px;font-size:6.50px;line-height:10px;color:#474747;font-weight:400;font-family:"Liberation Sans", sans-serif;transform-origin:0 50%;transform:scaleX(0.922);'>460.7</span>
<span style='left:3.20px;top:183.80px;font-size:6.50px;line-height:10px;color:#474747;font-weight:400;font-family:"Liberation Sans", sans-serif;transform-origin:0 50%;transform:scaleX(0.922);'>385.7</span>
<span style='left:3.20px;top:212.40px;font-size:6.50px;line-height:10px;color:#474747;font-weight:400;font-family:"Liberation Sans", sans-serif;transform-origin:0 50%;transform:scaleX(0.922);'>310.7</span>
<span style='left:3.20px;top:241.00px;font-size:6.50px;line-height:10px;color:#474747;font-weight:400;font-family:"Liberation Sans", sans-serif;transform-origin:0 50%;transform:scaleX(0.922);'>235.7</span>
<span style='left:3.20px;top:269.50px;font-size:6.50px;line-height:10px;color:#474747;font-weight:400;font-family:"Liberation Sans", sans-serif;transform-origin:0 50%;transform:scaleX(0.922);'>160.7</span>
<span style='left:3.20px;top:298.20px;font-size:6.50px;line-height:10px;color:#474747;font-weight:400;font-family:"Liberation Sans", sans-serif;transform-origin:0 50%;transform:scaleX(0.922);'>85.71</span>
<span style='left:3.20px;top:326.80px;font-size:6.50px;line-height:10px;color:#474747;font-weight:400;font-family:"Liberation Sans", sans-serif;transform-origin:0 50%;transform:scaleX(0.922);'>10.71</span>
<span style='left:0.80px;top:355.40px;font-size:6.50px;line-height:10px;color:#474747;font-weight:400;font-family:"Liberation Sans", sans-serif;transform-origin:0 50%;transform:scaleX(1.012);'>-64.2</span>
<svg style="left:0.00px;top:0.00px" width="650" height="407" viewBox="0 0 650 407"><rect x="16.2" y="358.6" width="3.6" height="3.4" fill="#fff" stroke="#333" stroke-width="0.7"/></svg>
<span style='left:13.13px;top:71.60px;font-size:5.60px;line-height:10px;color:#474747;font-weight:400;font-family:"Liberation Sans", sans-serif;'>A</span>
<span style='left:14.43px;top:362.20px;font-size:6.50px;line-height:10px;color:#474747;font-weight:400;font-family:"Liberation Sans", sans-serif;transform-origin:0 50%;transform:scaleX(0.900);'>0.0</span>
<span style='left:65.42px;top:362.20px;font-size:6.50px;line-height:10px;color:#474747;font-weight:400;font-family:"Liberation Sans", sans-serif;transform-origin:0 50%;transform:scaleX(0.900);'>0.2</span>
<span style='left:116.41px;top:362.20px;font-size:6.50px;line-height:10px;color:#474747;font-weight:400;font-family:"Liberation Sans", sans-serif;transform-origin:0 50%;transform:scaleX(0.900);'>0.4</span>
<span style='left:167.40px;top:362.20px;font-size:6.50px;line-height:10px;color:#474747;font-weight:400;font-family:"Liberation Sans", sans-serif;transform-origin:0 50%;transform:scaleX(0.900);'>0.6</span>
<span style='left:218.39px;top:362.20px;font-size:6.50px;line-height:10px;color:#474747;font-weight:400;font-family:"Liberation Sans", sans-serif;transform-origin:0 50%;transform:scaleX(0.900);'>0.8</span>
<span style='left:269.38px;top:362.20px;font-size:6.50px;line-height:10px;color:#474747;font-weight:400;font-family:"Liberation Sans", sans-serif;transform-origin:0 50%;transform:scaleX(0.900);'>1.0</span>
<span style='left:320.37px;top:362.20px;font-size:6.50px;line-height:10px;color:#474747;font-weight:400;font-family:"Liberation Sans", sans-serif;transform-origin:0 50%;transform:scaleX(0.900);'>1.2</span>
<span style='left:371.36px;top:362.20px;font-size:6.50px;line-height:10px;color:#474747;font-weight:400;font-family:"Liberation Sans", sans-serif;transform-origin:0 50%;transform:scaleX(0.900);'>1.4</span>
<span style='left:422.35px;top:362.20px;font-size:6.50px;line-height:10px;color:#474747;font-weight:400;font-family:"Liberation Sans", sans-serif;transform-origin:0 50%;transform:scaleX(0.900);'>1.6</span>
<span style='left:473.34px;top:362.20px;font-size:6.50px;line-height:10px;color:#474747;font-weight:400;font-family:"Liberation Sans", sans-serif;transform-origin:0 50%;transform:scaleX(0.900);'>1.8</span>
<span style='left:523.83px;top:362.20px;font-size:6.50px;line-height:10px;color:#474747;font-weight:400;font-family:"Liberation Sans", sans-serif;transform-origin:0 50%;transform:scaleX(0.900);'>2.0</span>
<div style="left:1.00px;top:373.80px;width:16.20px;height:4.60px;background:#8d8d8d;"></div>
<span style='left:4.94px;top:371.10px;font-size:4.40px;line-height:10px;color:#f0f0f0;font-weight:400;font-family:"Liberation Sans", sans-serif;'>x1.0</span>
<span style='left:19.40px;top:371.20px;font-size:5.40px;line-height:10px;color:#474747;font-weight:400;font-family:"Liberation Sans", sans-serif;'>s</span>
<svg style="left:0.00px;top:0.00px" width="650" height="407" viewBox="0 0 650 407"><polygon points="18.40,276.40 18.80,277.14 19.20,277.47 19.60,280.85 20.00,280.70 20.40,281.88 20.80,280.95 21.20,282.34 21.60,280.34 22.00,285.62 22.40,284.24 22.80,287.25 23.20,283.63 23.60,287.46 24.00,289.08 24.40,289.44 24.80,287.82 25.20,290.66 25.60,290.29 26.00,287.90 26.40,291.92 26.80,291.80 27.20,291.55 27.60,291.08 28.00,291.53 28.40,292.86 28.80,291.09 29.20,294.15 29.60,294.50 30.00,294.93 30.40,292.71 30.80,294.31 31.20,295.33 31.60,295.58 32.00,295.61 32.40,293.86 32.80,295.33 33.20,293.95 33.60,296.03 34.00,297.11 34.40,297.52 34.80,296.97 35.20,298.70 35.60,297.65 36.00,298.29 36.40,297.96 36.80,299.73 37.20,300.58 37.60,300.59 38.00,298.09 38.40,300.90 38.80,300.59 39.20,300.79 39.60,301.35 40.00,301.36 40.40,301.55 40.80,301.33 41.20,301.15 41.60,302.69 42.00,302.67 42.40,303.15 42.80,304.69 43.20,303.75 43.60,305.70 44.00,304.34 44.40,306.52 44.80,306.68 45.20,307.18 45.60,306.79 46.00,306.74 46.40,305.31 46.80,302.23 47.20,301.75 47.60,300.34 48.00,300.87 48.40,298.19 48.80,298.09 49.20,297.66 49.60,295.10 50.00,294.99 50.40,293.94 50.80,294.99 51.20,290.76 51.60,293.38 52.00,291.46 52.40,291.36 52.80,290.35 53.20,290.18 53.60,289.22 54.00,288.86 54.40,287.44 54.80,286.40 55.20,286.42 55.60,285.39 56.00,285.23 56.40,284.13 56.80,283.44 57.20,281.61 57.60,282.96 58.00,281.46 58.40,281.07 58.80,278.80 59.20,278.58 59.60,279.23 60.00,275.47 60.40,275.96 60.80,276.24 61.20,276.68 61.60,275.74 62.00,272.68 62.40,273.90 62.80,270.26 63.20,271.88 63.60,270.69 64.00,272.51 64.40,270.89 64.80,270.52 65.20,272.08 65.60,272.15 66.00,273.74 66.40,275.32 66.80,275.77 67.20,275.12 67.60,275.26 68.00,278.03 68.40,277.72 68.80,275.76 69.20,278.58 69.60,279.13 70.00,279.28 70.40,278.80 70.80,281.30 71.20,278.24 71.60,280.56 72.00,280.92 72.40,283.66 72.80,283.44 73.20,282.40 73.60,282.79 74.00,285.19 74.40,285.31 74.80,286.53 75.20,284.10 75.60,284.15 76.00,286.98 76.40,287.22 76.80,286.38 77.20,289.01 77.60,289.00 78.00,289.07 78.40,286.86 78.80,289.13 79.20,291.09 79.60,290.44 80.00,291.81 80.40,291.86 80.80,289.57 81.20,292.74 81.60,290.55 82.00,292.97 82.40,293.65 82.80,293.68 83.20,292.89 83.60,291.79 84.00,294.05 84.40,294.38 84.80,295.90 85.20,294.35 85.60,295.07 86.00,297.26 86.40,297.01 86.80,296.80 87.20,296.38 87.60,298.39 88.00,298.85 88.40,298.03 88.80,298.93 89.20,299.77 89.60,300.71 90.00,300.79 90.40,300.90 90.80,301.77 91.20,298.61 91.60,299.10 92.00,301.19 92.40,301.57 92.80,303.00 93.20,303.29 93.60,302.19 94.00,303.86 94.40,302.95 94.80,304.52 95.20,304.07 95.60,302.35 96.00,304.26 96.40,303.51 96.80,303.14 97.20,298.21 97.60,299.33 98.00,295.81 98.40,298.29 98.80,296.63 99.20,296.33 99.60,294.16 100.00,293.29 100.40,293.94 100.80,292.75 101.20,289.03 101.60,289.33 102.00,289.69 102.40,288.55 102.80,288.86 103.20,287.85 103.60,286.76 104.00,286.33 104.40,285.04 104.80,282.67 105.20,282.29 105.60,281.44 106.00,279.28 106.40,280.14 106.80,277.25 107.20,278.49 107.60,279.70 108.00,278.05 108.40,276.25 108.80,277.52 109.20,275.89 109.60,275.33 110.00,274.22 110.40,272.37 110.80,272.24 111.20,273.36 111.60,271.70 112.00,271.61 112.40,271.16 112.80,274.76 113.20,274.30 113.60,276.40 114.00,277.41 114.40,275.01 114.80,277.65 115.20,279.31 115.60,278.60 116.00,277.89 116.40,279.91 116.80,280.54 117.20,280.42 117.60,279.77 118.00,282.14 118.40,282.66 118.80,282.04 119.20,282.16 119.60,283.08 120.00,285.42 120.40,284.73 120.80,285.05 121.20,285.01 121.60,283.80 122.00,287.52 122.40,287.71 122.80,288.84 123.20,284.50 123.60,287.09 124.00,288.10 124.40,290.23 124.80,290.29 125.20,291.30 125.60,289.41 126.00,292.15 126.40,292.31 126.80,290.31 127.20,291.74 127.60,291.48 128.00,291.71 128.40,293.45 128.80,292.93 129.20,295.52 129.60,295.82 130.00,294.26 130.40,295.86 130.80,296.00 131.20,296.93 131.60,297.68 132.00,297.18 132.40,297.72 132.80,297.50 133.20,298.35 133.60,298.27 134.00,299.94 134.40,299.64 134.80,299.58 135.20,299.93 135.60,299.49 136.00,301.01 136.40,300.17 136.80,300.64 137.20,301.72 137.60,300.66 138.00,303.28 138.40,303.29 138.80,301.02 139.20,304.00 139.60,304.85 140.00,305.64 140.40,306.22 140.80,305.74 141.20,306.53 141.60,303.16 142.00,303.46 142.40,302.68 142.80,300.78 143.20,301.16 143.60,299.04 144.00,299.16 144.40,295.61 144.80,296.02 145.20,294.94 145.60,294.93 146.00,293.42 146.40,292.37 146.80,292.58 147.20,290.62 147.60,288.22 148.00,288.77 148.40,289.69 148.80,287.63 149.20,287.54 149.60,286.97 150.00,286.30 150.40,284.60 150.80,284.11 151.20,283.50 151.60,283.52 152.00,282.09 152.40,281.16 152.80,279.65 153.20,280.19 153.60,279.18 154.00,277.34 154.40,278.18 154.80,272.49 155.20,276.64 155.60,276.03 156.00,277.86 156.40,278.54 156.80,280.14 157.20,281.11 157.60,278.96 158.00,281.78 158.40,281.78 158.80,282.19 159.20,282.68 159.60,283.60 160.00,282.69 160.40,284.38 160.80,282.75 161.20,285.93 161.60,285.28 162.00,286.29 162.40,286.77 162.80,287.26 163.20,285.57 163.60,287.59 164.00,288.30 164.40,288.38 164.80,288.28 165.20,290.02 165.60,289.83 166.00,289.57 166.40,288.06 166.80,288.60 167.20,291.48 167.60,292.37 168.00,292.84 168.40,292.33 168.80,293.50 169.20,293.10 169.60,294.10 170.00,294.24 170.40,295.04 170.80,294.05 171.20,291.36 171.60,296.09 172.00,293.53 172.40,295.96 172.80,296.96 173.20,297.57 173.60,295.16 174.00,298.14 174.40,297.69 174.80,298.92 175.20,298.56 175.60,297.45 176.00,298.91 176.40,299.90 176.80,300.06 177.20,300.26 177.60,299.40 178.00,301.24 178.40,301.45 178.80,302.28 179.20,301.39 179.60,301.59 180.00,301.97 180.40,302.97 180.80,303.21 181.20,304.19 181.60,304.25 182.00,304.10 182.40,302.97 182.80,303.93 183.20,305.12 183.60,304.76 184.00,302.62 184.40,306.82 184.80,304.42 185.20,304.08 185.60,304.53 186.00,303.23 186.40,301.97 186.80,300.62 187.20,300.43 187.60,299.41 188.00,294.63 188.40,296.91 188.80,295.95 189.20,294.60 189.60,294.60 190.00,292.58 190.40,291.02 190.80,290.15 191.20,290.82 191.60,290.71 192.00,288.86 192.40,287.14 192.80,287.69 193.20,285.89 193.60,286.00 194.00,285.17 194.40,281.91 194.80,283.28 195.20,283.35 195.60,283.11 196.00,280.52 196.40,280.65 196.80,280.01 197.20,279.81 197.60,279.28 198.00,276.08 198.40,277.70 198.80,277.31 199.20,273.60 199.60,274.41 200.00,273.69 200.40,272.50 200.80,273.90 201.20,274.77 201.60,274.81 202.00,273.90 202.40,272.95 202.80,277.19 203.20,277.75 203.60,279.83 204.00,279.64 204.40,279.90 204.80,279.03 205.20,277.87 205.60,282.57 206.00,283.18 206.40,283.37 206.80,280.86 207.20,283.62 207.60,282.81 208.00,285.17 208.40,285.84 208.80,285.94 209.20,284.10 209.60,284.92 210.00,286.29 210.40,286.38 210.80,288.71 211.20,288.87 211.60,287.92 212.00,287.55 212.40,288.05 212.80,289.03 213.20,289.49 213.60,290.29 214.00,289.17 214.40,288.35 214.80,292.42 215.20,289.20 215.60,291.86 216.00,292.53 216.40,293.89 216.80,290.84 217.20,293.87 217.60,292.12 218.00,294.07 218.40,294.60 218.80,294.06 219.20,296.57 219.60,295.30 220.00,297.10 220.40,297.25 220.80,295.76 221.20,297.39 221.60,298.81 222.00,296.78 222.40,299.15 222.80,299.47 223.20,299.33 223.60,300.27 224.00,300.90 224.40,299.45 224.80,300.11 225.20,301.87 225.60,302.50 226.00,302.51 226.40,300.43 226.80,302.83 227.20,303.65 227.60,303.72 228.00,303.70 228.40,304.65 228.80,303.91 229.20,305.45 229.60,305.13 230.00,306.11 230.40,306.99 230.80,305.15 231.20,300.52 231.60,304.43 232.00,304.12 232.40,300.82 232.80,300.00 233.20,299.77 233.60,298.14 234.00,297.64 234.40,298.10 234.80,296.69 235.20,295.64 235.60,293.96 236.00,294.14 236.40,291.80 236.80,291.83 237.20,290.84 237.60,291.69 238.00,290.25 238.40,289.24 238.80,288.40 239.20,288.06 239.60,287.37 240.00,286.99 240.40,287.09 240.80,285.34 241.20,285.52 241.60,285.07 242.00,283.83 242.40,283.86 242.80,280.52 243.20,281.39 243.60,280.64 244.00,281.21 244.40,280.25 244.80,279.40 245.20,277.90 245.60,276.95 246.00,277.76 246.40,274.76 246.80,277.12 247.20,276.34 247.60,272.21 248.00,274.39 248.40,273.55 248.80,272.05 249.20,273.53 249.60,271.59 250.00,272.00 250.40,272.63 250.80,273.08 251.20,273.57 251.60,274.78 252.00,276.35 252.40,276.80 252.80,276.51 253.20,275.34 253.60,277.83 254.00,279.02 254.40,277.56 254.80,280.26 255.20,279.94 255.60,280.87 256.00,281.05 256.40,280.13 256.80,283.23 257.20,282.51 257.60,283.88 258.00,282.40 258.40,285.13 258.80,284.69 259.20,284.90 259.60,286.01 260.00,287.07 260.40,286.71 260.80,287.44 261.20,286.64 261.60,287.07 262.00,288.54 262.40,285.05 262.80,287.85 263.20,289.51 263.60,288.86 264.00,290.62 264.40,291.61 264.80,292.16 265.20,289.83 265.60,292.36 266.00,293.11 266.40,293.09 266.80,294.07 267.20,293.27 267.60,293.43 268.00,293.94 268.40,295.05 268.80,296.11 269.20,294.51 269.60,294.88 270.00,294.98 270.40,296.54 270.80,297.63 271.20,298.48 271.60,295.73 272.00,297.89 272.40,297.96 272.80,298.65 273.20,298.45 273.60,300.64 274.00,300.13 274.40,300.21 274.80,300.28 275.20,298.69 275.60,300.59 276.00,301.64 276.40,302.33 276.80,302.03 277.20,303.75 277.60,301.02 278.00,302.78 278.40,304.76 278.80,305.17 279.20,302.16 279.60,305.02 280.00,306.46 280.40,303.58 280.80,307.68 281.20,307.39 281.60,305.93 282.00,301.02 282.40,301.25 282.80,301.62 283.20,300.12 283.60,299.62 284.00,296.23 284.40,297.72 284.80,296.36 285.20,295.12 285.60,292.06 286.00,293.15 286.40,293.35 286.80,292.17 287.20,291.24 287.60,289.72 288.00,289.16 288.40,288.16 288.80,286.71 289.20,284.73 289.60,285.10 290.00,285.41 290.40,283.77 290.80,283.67 291.20,281.02 291.60,282.43 292.00,278.64 292.40,278.10 292.80,279.31 293.20,277.51 293.60,277.98 294.00,276.82 294.40,276.16 294.80,276.48 295.20,275.03 295.60,274.86 296.00,272.84 296.40,272.61 296.80,271.30 297.20,271.24 297.60,273.61 298.00,272.95 298.40,274.86 298.80,274.30 299.20,274.06 299.60,277.49 300.00,277.07 300.40,277.30 300.80,277.42 301.20,278.87 301.60,279.05 302.00,281.00 302.40,279.22 302.80,281.06 303.20,280.98 303.60,281.41 304.00,281.82 304.40,281.48 304.80,282.86 305.20,285.09 305.60,284.19 306.00,283.14 306.40,284.85 306.80,286.42 307.20,285.76 307.60,284.72 308.00,285.73 308.40,288.73 308.80,288.72 309.20,288.82 309.60,288.19 310.00,288.96 310.40,289.52 310.80,288.76 311.20,290.98 311.60,291.65 312.00,291.59 312.40,291.34 312.80,292.89 313.20,293.64 313.60,294.06 314.00,294.55 314.40,295.28 314.80,295.07 315.20,295.90 315.60,296.33 316.00,295.44 316.40,296.55 316.80,297.10 317.20,296.00 317.60,298.30 318.00,298.35 318.40,296.73 318.80,298.48 319.20,298.62 319.60,299.13 320.00,297.71 320.40,299.90 320.80,300.58 321.20,300.58 321.60,301.48 322.00,301.69 322.40,301.86 322.80,301.79 323.20,300.79 323.60,303.77 324.00,302.66 324.40,302.33 324.80,303.20 325.20,304.68 325.60,305.81 326.00,306.41 326.40,306.69 326.80,306.84 327.20,304.77 327.60,303.12 328.00,302.99 328.40,298.44 328.80,299.39 329.20,298.78 329.60,297.11 330.00,294.85 330.40,296.15 330.80,295.22 331.20,293.83 331.60,293.64 332.00,292.51 332.40,292.61 332.80,290.07 333.20,289.58 333.60,287.74 334.00,289.35 334.40,287.26 334.80,285.69 335.20,286.96 335.60,285.75 336.00,283.36 336.40,284.03 336.80,282.42 337.20,280.30 337.60,282.56 338.00,281.02 338.40,280.41 338.80,278.87 339.20,277.65 339.60,277.22 340.00,277.11 340.40,278.12 340.80,279.06 341.20,278.15 341.60,281.12 342.00,281.35 342.40,282.41 342.80,280.54 343.20,283.14 343.60,282.16 344.00,281.00 344.40,284.00 344.80,282.63 345.20,285.09 345.60,284.86 346.00,286.85 346.40,283.30 346.80,287.61 347.20,284.52 347.60,287.64 348.00,287.29 348.40,287.51 348.80,286.97 349.20,287.75 349.60,287.45 350.00,288.18 350.40,291.18 350.80,290.32 351.20,289.90 351.60,292.50 352.00,292.45 352.40,292.72 352.80,292.57 353.20,291.96 353.60,291.84 354.00,292.71 354.40,293.82 354.80,293.30 355.20,295.04 355.60,292.14 356.00,294.91 356.40,295.99 356.80,292.13 357.20,293.99 357.60,293.88 358.00,296.80 358.40,297.18 358.80,297.17 359.20,295.07 359.60,298.90 360.00,296.91 360.40,298.63 360.80,297.76 361.20,298.43 361.60,298.67 362.00,300.03 362.40,298.21 362.80,300.49 363.20,299.12 363.60,302.04 364.00,300.15 364.40,302.90 364.80,303.39 365.20,302.90 365.60,303.47 366.00,302.31 366.40,301.86 366.80,303.99 367.20,304.98 367.60,302.54 368.00,303.96 368.40,304.03 368.80,305.23 369.20,305.63 369.60,307.53 370.00,307.27 370.40,305.69 370.80,304.98 371.20,304.77 371.60,302.93 372.00,302.00 372.40,299.24 372.80,297.37 373.20,298.57 373.60,297.83 374.00,296.97 374.40,295.05 374.80,293.11 375.20,294.88 375.60,294.23 376.00,290.95 376.40,291.64 376.80,290.23 377.20,289.04 377.60,288.40 378.00,285.34 378.40,286.22 378.80,285.69 379.20,285.82 379.60,286.20 380.00,285.41 380.40,283.58 380.80,281.72 381.20,283.12 381.60,281.23 382.00,280.77 382.40,280.78 382.80,279.17 383.20,277.39 383.60,278.38 384.00,275.95 384.40,277.00 384.80,276.45 385.20,270.84 385.60,274.99 386.00,272.52 386.40,272.10 386.80,272.52 387.20,269.56 387.60,272.68 388.00,273.94 388.40,275.25 388.80,275.38 389.20,276.84 389.60,276.74 390.00,278.25 390.40,278.40 390.80,277.87 391.20,279.99 391.60,280.14 392.00,280.87 392.40,280.86 392.80,280.56 393.20,282.97 393.60,282.08 394.00,279.35 394.40,283.76 394.80,285.04 395.20,284.98 395.60,284.89 396.00,286.52 396.40,286.04 396.80,286.63 397.20,285.63 397.60,286.21 398.00,287.16 398.40,287.29 398.80,289.33 399.20,288.76 399.60,288.78 400.00,290.75 400.40,290.44 400.80,290.30 401.20,289.73 401.60,291.06 402.00,292.30 402.40,293.45 402.80,292.37 403.20,294.26 403.60,292.27 404.00,295.05 404.40,295.40 404.80,295.61 405.20,296.08 405.60,293.52 406.00,296.89 406.40,295.89 406.80,295.71 407.20,296.10 407.60,295.40 408.00,298.57 408.40,297.45 408.80,297.63 409.20,299.22 409.60,299.73 410.00,300.65 410.40,299.45 410.80,300.33 411.20,299.68 411.60,301.39 412.00,300.05 412.40,300.76 412.80,301.52 413.20,303.09 413.60,302.06 414.00,301.13 414.40,303.99 414.80,301.88 415.20,304.34 415.60,304.51 416.00,304.92 416.40,306.78 416.80,305.03 417.20,307.26 417.60,306.68 418.00,305.54 418.40,303.72 418.80,300.99 419.20,298.34 419.60,299.12 420.00,299.61 420.40,299.09 420.80,295.39 421.20,297.28 421.60,295.43 422.00,295.06 422.40,294.36 422.80,291.78 423.20,292.79 423.60,292.32 424.00,291.43 424.40,289.71 424.80,286.75 425.20,289.20 425.60,288.46 426.00,286.13 426.40,286.39 426.80,286.40 427.20,284.63 427.60,284.66 428.00,283.09 428.40,283.50 428.80,281.20 429.20,281.93 429.60,280.63 430.00,276.11 430.40,279.85 430.80,279.70 431.20,276.68 431.60,278.14 432.00,276.36 432.40,276.62 432.80,274.33 433.20,274.14 433.60,274.21 434.00,274.24 434.40,273.79 434.80,271.18 435.20,270.67 435.60,271.31 436.00,270.66 436.40,269.57 436.80,267.61 437.20,271.13 437.60,270.39 438.00,271.23 438.40,270.92 438.80,274.04 439.20,274.36 439.60,273.54 440.00,274.84 440.40,276.12 440.80,277.55 441.20,279.05 441.60,279.65 442.00,278.36 442.40,280.22 442.80,281.27 443.20,281.60 443.60,282.35 444.00,281.89 444.40,282.88 444.80,282.24 445.20,281.00 445.60,284.71 446.00,283.23 446.40,285.39 446.80,286.83 447.20,287.12 447.60,287.66 448.00,287.87 448.40,285.62 448.80,286.61 449.20,288.30 449.60,289.78 450.00,289.75 450.40,288.30 450.80,288.28 451.20,290.13 451.60,290.35 452.00,291.95 452.40,293.30 452.80,293.28 453.20,292.90 453.60,294.38 454.00,294.52 454.40,293.28 454.80,295.40 455.20,294.86 455.60,295.42 456.00,296.49 456.40,296.23 456.80,296.00 457.20,298.18 457.60,298.54 458.00,297.90 458.40,299.16 458.80,297.42 459.20,300.28 459.60,299.23 460.00,297.85 460.40,300.52 460.80,301.19 461.20,300.20 461.60,301.25 462.00,301.61 462.40,301.24 462.80,303.63 463.20,303.15 463.60,303.10 464.00,304.80 464.40,304.16 464.80,304.56 465.20,307.29 465.60,306.51 466.00,303.94 466.40,303.45 466.80,298.61 467.20,302.17 467.60,300.45 468.00,299.51 468.40,296.59 468.80,297.36 469.20,295.25 469.60,292.56 470.00,294.32 470.40,293.87 470.80,293.46 471.20,292.16 471.60,292.03 472.00,290.31 472.40,288.56 472.80,289.15 473.20,288.44 473.60,287.56 474.00,284.24 474.40,286.34 474.80,284.85 475.20,284.02 475.60,283.76 476.00,282.72 476.40,279.40 476.80,281.88 477.20,281.36 477.60,280.74 478.00,278.07 478.40,275.83 478.80,276.10 479.20,277.33 479.60,276.58 480.00,273.26 480.40,275.42 480.80,271.41 481.20,274.08 481.60,273.78 482.00,272.24 482.40,268.65 482.80,268.94 483.20,267.84 483.60,270.57 484.00,272.20 484.40,273.63 484.80,275.07 485.20,275.77 485.60,274.68 486.00,275.31 486.40,276.98 486.80,275.31 487.20,278.09 487.60,277.30 488.00,278.83 488.40,279.99 488.80,280.27 489.20,281.79 489.60,282.20 490.00,283.24 490.40,282.42 490.80,283.25 491.20,284.44 491.60,285.21 492.00,285.36 492.40,286.06 492.80,286.66 493.20,285.95 493.60,287.54 494.00,288.22 494.40,287.25 494.80,287.52 495.20,286.95 495.60,289.24 496.00,289.99 496.40,290.83 496.80,290.82 497.20,291.48 497.60,292.08 498.00,291.77 498.40,292.54 498.80,292.95 499.20,293.23 499.60,291.86 500.00,291.88 500.40,294.82 500.80,292.86 501.20,295.76 501.60,296.23 502.00,293.50 502.40,296.98 502.80,297.21 503.20,297.59 503.60,296.16 504.00,297.75 504.40,297.07 504.80,298.32 505.20,299.07 505.60,300.02 506.00,297.76 506.40,301.11 506.80,296.85 507.20,301.31 507.60,299.40 508.00,301.90 508.40,301.61 508.80,302.09 509.20,302.60 509.60,302.97 510.00,304.58 510.40,302.83 510.80,303.88 511.20,303.80 511.60,305.84 512.00,307.27 512.40,306.40 512.80,307.32 513.20,305.47 513.60,303.82 514.00,303.80 514.40,301.51 514.80,302.36 515.20,298.76 515.60,298.46 516.00,298.49 516.40,298.38 516.80,295.88 517.20,295.66 517.60,295.81 518.00,292.83 518.40,293.38 518.80,292.94 519.20,291.18 519.60,291.95 520.00,290.05 520.40,288.75 520.80,288.70 521.20,287.99 521.60,288.18 522.00,285.30 522.40,287.32 522.80,286.04 523.20,282.88 523.60,284.82 524.00,282.91 524.40,283.61 524.80,281.78 525.20,282.35 525.60,278.03 526.00,280.43 526.40,278.87 526.80,276.93 527.20,277.91 527.60,276.74 528.00,276.73 528.40,276.63 528.40,289.17 528.00,289.82 527.60,290.26 527.20,291.79 526.80,292.76 526.40,292.58 526.00,295.82 525.60,293.85 525.20,297.55 524.80,294.82 524.40,297.22 524.00,295.86 523.60,296.83 523.20,299.56 522.80,299.79 522.40,299.46 522.00,299.78 521.60,300.30 521.20,300.84 520.80,300.62 520.40,301.16 520.00,303.74 519.60,303.28 519.20,303.67 518.80,305.49 518.40,304.55 518.00,306.75 517.60,310.66 517.20,307.15 516.80,308.37 516.40,308.15 516.00,309.46 515.60,311.23 515.20,310.90 514.80,313.30 514.40,314.74 514.00,314.95 513.60,314.53 513.20,316.07 512.80,320.21 512.40,317.73 512.00,318.66 511.60,319.05 511.20,316.89 510.80,318.38 510.40,318.21 510.00,316.55 509.60,316.46 509.20,315.79 508.80,317.85 508.40,316.76 508.00,314.16 507.60,313.58 507.20,317.03 506.80,313.39 506.40,315.29 506.00,312.97 505.60,316.12 505.20,312.93 504.80,312.82 504.40,310.77 504.00,312.66 503.60,309.99 503.20,311.54 502.80,309.10 502.40,310.50 502.00,309.11 501.60,312.14 501.20,308.74 500.80,307.46 500.40,308.52 500.00,307.03 499.60,306.65 499.20,304.95 498.80,304.86 498.40,304.36 498.00,304.53 497.60,303.40 497.20,304.89 496.80,302.58 496.40,302.99 496.00,302.94 495.60,301.66 495.20,301.63 494.80,302.03 494.40,300.25 494.00,299.80 493.60,300.53 493.20,300.36 492.80,298.85 492.40,298.89 492.00,296.68 491.60,296.82 491.20,295.33 490.80,295.50 490.40,296.23 490.00,294.27 489.60,294.26 489.20,292.68 488.80,292.96 488.40,294.13 488.00,291.49 487.60,291.91 487.20,291.69 486.80,288.66 486.40,288.49 486.00,287.54 485.60,287.21 485.20,286.13 484.80,284.01 484.40,282.83 484.00,283.27 483.60,285.15 483.20,286.53 482.80,285.82 482.40,287.40 482.00,286.44 481.60,286.63 481.20,286.64 480.80,287.64 480.40,288.56 480.00,288.97 479.60,291.55 479.20,294.40 478.80,290.47 478.40,295.11 478.00,292.36 477.60,293.60 477.20,293.93 476.80,295.39 476.40,294.14 476.00,294.97 475.60,297.10 475.20,298.56 474.80,297.00 474.40,298.75 474.00,299.42 473.60,300.38 473.20,300.97 472.80,302.60 472.40,303.76 472.00,302.25 471.60,304.37 471.20,305.82 470.80,308.34 470.40,306.13 470.00,306.97 469.60,308.63 469.20,307.67 468.80,308.34 468.40,309.39 468.00,310.12 467.60,310.38 467.20,312.52 466.80,312.82 466.40,314.62 466.00,315.22 465.60,316.10 465.20,320.52 464.80,320.10 464.40,318.33 464.00,316.55 463.60,317.44 463.20,318.66 462.80,315.08 462.40,315.81 462.00,314.35 461.60,315.06 461.20,315.07 460.80,313.11 460.40,312.70 460.00,313.07 459.60,312.90 459.20,313.83 458.80,311.11 458.40,311.02 458.00,312.28 457.60,311.20 457.20,312.91 456.80,309.46 456.40,308.61 456.00,308.36 455.60,310.53 455.20,308.73 454.80,307.69 454.40,306.82 454.00,306.82 453.60,306.42 453.20,306.65 452.80,308.03 452.40,304.66 452.00,303.97 451.60,303.43 451.20,303.69 450.80,304.02 450.40,302.70 450.00,301.89 449.60,301.30 449.20,301.18 448.80,300.04 448.40,302.58 448.00,299.50 447.60,298.71 447.20,300.78 446.80,297.59 446.40,298.02 446.00,298.62 445.60,299.60 445.20,297.65 444.80,296.12 444.40,294.89 444.00,295.10 443.60,294.05 443.20,292.55 442.80,291.89 442.40,295.04 442.00,292.87 441.60,290.39 441.20,290.65 440.80,290.48 440.40,288.26 440.00,288.03 439.60,288.20 439.20,285.56 438.80,286.33 438.40,284.03 438.00,283.05 437.60,284.66 437.20,283.14 436.80,283.09 436.40,283.58 436.00,286.37 435.60,284.42 435.20,285.86 434.80,286.10 434.40,289.51 434.00,286.66 433.60,287.08 433.20,290.89 432.80,288.53 432.40,289.53 432.00,290.39 431.60,290.39 431.20,291.28 430.80,291.36 430.40,295.64 430.00,292.94 429.60,293.21 429.20,295.18 428.80,295.29 428.40,295.36 428.00,296.67 427.60,299.84 427.20,296.75 426.80,299.54 426.40,298.03 426.00,298.55 425.60,299.72 425.20,300.52 424.80,300.75 424.40,301.29 424.00,302.84 423.60,302.85 423.20,304.51 422.80,304.22 422.40,304.96 422.00,306.38 421.60,306.60 421.20,309.13 420.80,309.71 420.40,309.74 420.00,309.67 419.60,313.01 419.20,312.83 418.80,313.58 418.40,314.37 418.00,315.06 417.60,319.04 417.20,319.51 416.80,319.26 416.40,317.59 416.00,317.93 415.60,318.21 415.20,316.52 414.80,320.56 414.40,316.31 414.00,317.02 413.60,315.64 413.20,316.36 412.80,315.86 412.40,314.72 412.00,315.44 411.60,313.38 411.20,312.95 410.80,315.09 410.40,312.34 410.00,314.32 409.60,312.86 409.20,313.19 408.80,311.21 408.40,311.56 408.00,312.16 407.60,310.06 407.20,309.92 406.80,308.99 406.40,309.90 406.00,309.02 405.60,308.25 405.20,307.29 404.80,306.97 404.40,307.77 404.00,307.22 403.60,307.96 403.20,307.20 402.80,306.71 402.40,304.47 402.00,305.60 401.60,305.05 401.20,303.80 400.80,303.18 400.40,302.23 400.00,303.20 399.60,301.95 399.20,302.72 398.80,301.55 398.40,302.45 398.00,299.55 397.60,300.37 397.20,298.65 396.80,300.14 396.40,297.74 396.00,300.93 395.60,298.28 395.20,297.79 394.80,296.02 394.40,296.26 394.00,295.53 393.60,294.94 393.20,296.62 392.80,293.86 392.40,292.79 392.00,294.50 391.60,291.90 391.20,291.48 390.80,290.53 390.40,289.96 390.00,290.58 389.60,288.84 389.20,287.82 388.80,286.50 388.40,287.03 388.00,285.80 387.60,284.32 387.20,286.63 386.80,285.70 386.40,287.40 386.00,288.48 385.60,287.45 385.20,288.08 384.80,289.55 384.40,290.66 384.00,290.18 383.60,291.48 383.20,291.38 382.80,293.74 382.40,294.76 382.00,293.93 381.60,294.17 381.20,295.20 380.80,295.85 380.40,297.37 380.00,296.81 379.60,299.35 379.20,298.49 378.80,298.77 378.40,301.95 378.00,301.52 377.60,301.37 377.20,301.96 376.80,303.81 376.40,303.64 376.00,305.87 375.60,304.61 375.20,305.19 374.80,307.86 374.40,308.80 374.00,307.84 373.60,310.13 373.20,310.70 372.80,310.88 372.40,311.92 372.00,315.18 371.60,313.79 371.20,315.34 370.80,317.45 370.40,316.98 370.00,317.73 369.60,318.49 369.20,320.27 368.80,320.03 368.40,320.33 368.00,318.12 367.60,318.01 367.20,316.42 366.80,316.08 366.40,316.88 366.00,316.96 365.60,316.77 365.20,318.46 364.80,314.60 364.40,317.04 364.00,314.95 363.60,315.14 363.20,314.96 362.80,314.13 362.40,313.32 362.00,314.46 361.60,312.73 361.20,311.81 360.80,314.14 360.40,311.87 360.00,313.37 359.60,312.18 359.20,310.07 358.80,311.86 358.40,309.57 358.00,311.37 357.60,309.75 357.20,309.70 356.80,308.03 356.40,307.92 356.00,310.45 355.60,309.64 355.20,308.62 354.80,307.24 354.40,305.98 354.00,308.83 353.60,309.13 353.20,306.71 352.80,306.87 352.40,304.18 352.00,305.42 351.60,303.57 351.20,306.53 350.80,304.00 350.40,302.78 350.00,305.61 349.60,302.91 349.20,302.60 348.80,300.58 348.40,302.43 348.00,305.51 347.60,301.05 347.20,299.77 346.80,300.43 346.40,299.04 346.00,298.45 345.60,297.11 345.20,296.67 344.80,297.25 344.40,297.38 344.00,297.72 343.60,294.63 343.20,293.94 342.80,294.23 342.40,293.12 342.00,294.77 341.60,292.19 341.20,289.95 340.80,295.37 340.40,293.31 340.00,291.03 339.60,292.13 339.20,293.78 338.80,293.62 338.40,294.31 338.00,295.23 337.60,295.28 337.20,297.83 336.80,297.17 336.40,296.63 336.00,297.40 335.60,300.04 335.20,298.81 334.80,300.04 334.40,300.78 334.00,302.84 333.60,301.28 333.20,302.55 332.80,303.29 332.40,303.37 332.00,304.53 331.60,306.32 331.20,308.37 330.80,306.83 330.40,307.54 330.00,309.60 329.60,310.00 329.20,311.43 328.80,312.95 328.40,312.05 328.00,314.83 327.60,313.57 327.20,316.70 326.80,318.34 326.40,317.19 326.00,317.71 325.60,316.90 325.20,316.36 324.80,316.23 324.40,316.19 324.00,315.84 323.60,317.06 323.20,317.34 322.80,314.52 322.40,313.89 322.00,314.70 321.60,317.29 321.20,313.28 320.80,313.69 320.40,312.45 320.00,316.06 319.60,311.69 319.20,311.16 318.80,313.65 318.40,310.31 318.00,310.49 317.60,311.54 317.20,309.02 316.80,308.93 316.40,309.90 316.00,308.02 315.60,307.74 315.20,307.13 314.80,307.47 314.40,306.55 314.00,307.00 313.60,308.50 313.20,305.36 312.80,305.97 312.40,305.48 312.00,306.38 311.60,304.44 311.20,303.99 310.80,305.30 310.40,303.23 310.00,307.07 309.60,301.17 309.20,300.85 308.80,301.61 308.40,300.63 308.00,300.28 307.60,301.77 307.20,299.05 306.80,300.72 306.40,298.01 306.00,297.56 305.60,298.55 305.20,296.23 304.80,296.33 304.40,294.99 304.00,298.98 303.60,295.40 303.20,295.43 302.80,293.88 302.40,294.29 302.00,293.24 301.60,292.39 301.20,291.71 300.80,290.92 300.40,292.76 300.00,289.63 299.60,287.97 299.20,287.06 298.80,287.16 298.40,286.09 298.00,283.55 297.60,285.95 297.20,285.20 296.80,287.44 296.40,288.23 296.00,287.16 295.60,288.93 295.20,294.32 294.80,288.55 294.40,291.95 294.00,289.91 293.60,291.11 293.20,291.99 292.80,295.02 292.40,292.55 292.00,294.06 291.60,297.00 291.20,298.92 290.80,297.66 290.40,296.35 290.00,298.18 289.60,299.62 289.20,299.49 288.80,300.52 288.40,302.75 288.00,301.09 287.60,301.38 287.20,302.17 286.80,302.80 286.40,304.41 286.00,306.10 285.60,306.58 285.20,306.37 284.80,308.41 284.40,308.41 284.00,308.63 283.60,309.45 283.20,312.22 282.80,314.11 282.40,313.54 282.00,313.72 281.60,315.85 281.20,316.18 280.80,318.07 280.40,318.27 280.00,318.51 279.60,319.31 279.20,317.12 278.80,316.84 278.40,316.13 278.00,316.19 277.60,315.96 277.20,316.93 276.80,315.78 276.40,314.23 276.00,317.69 275.60,313.79 275.20,313.88 274.80,313.16 274.40,314.38 274.00,312.87 273.60,313.93 273.20,311.61 272.80,311.69 272.40,312.11 272.00,310.25 271.60,310.44 271.20,311.45 270.80,310.94 270.40,310.71 270.00,308.57 269.60,308.32 269.20,308.02 268.80,309.64 268.40,307.49 268.00,308.22 267.60,308.94 267.20,305.81 266.80,306.17 266.40,306.54 266.00,306.00 265.60,306.16 265.20,303.95 264.80,304.23 264.40,303.57 264.00,303.25 263.60,303.24 263.20,304.02 262.80,302.96 262.40,301.31 262.00,300.40 261.60,300.96 261.20,299.39 260.80,302.36 260.40,298.21 260.00,300.09 259.60,299.76 259.20,299.37 258.80,297.69 258.40,297.84 258.00,297.25 257.60,297.33 257.20,296.09 256.80,294.92 256.40,293.47 256.00,293.69 255.60,294.48 255.20,291.78 254.80,292.38 254.40,292.03 254.00,292.53 253.60,290.29 253.20,290.55 252.80,287.25 252.40,286.66 252.00,286.80 251.60,284.54 251.20,283.59 250.80,283.70 250.40,286.16 250.00,286.91 249.60,287.45 249.20,287.47 248.80,286.82 248.40,287.75 248.00,287.78 247.60,288.34 247.20,289.63 246.80,289.98 246.40,290.03 246.00,290.99 245.60,291.10 245.20,294.13 244.80,293.67 244.40,293.92 244.00,293.81 243.60,293.78 243.20,295.31 242.80,295.59 242.40,301.35 242.00,296.61 241.60,299.12 241.20,298.89 240.80,300.90 240.40,298.95 240.00,301.20 239.60,301.69 239.20,299.92 238.80,300.63 238.40,301.18 238.00,304.20 237.60,302.66 237.20,303.35 236.80,305.98 236.40,304.56 236.00,306.72 235.60,310.61 235.20,308.65 234.80,308.78 234.40,311.56 234.00,309.12 233.60,311.95 233.20,311.45 232.80,311.04 232.40,311.92 232.00,313.21 231.60,314.20 231.20,316.38 230.80,317.71 230.40,319.54 230.00,317.26 229.60,317.52 229.20,319.02 228.80,317.57 228.40,316.32 228.00,316.90 227.60,319.00 227.20,315.70 226.80,314.94 226.40,316.98 226.00,314.80 225.60,316.56 225.20,314.68 224.80,314.93 224.40,315.21 224.00,313.76 223.60,311.99 223.20,313.67 222.80,311.82 222.40,311.77 222.00,310.78 221.60,313.87 221.20,309.92 220.80,309.58 220.40,310.34 220.00,308.61 219.60,308.48 219.20,307.92 218.80,307.58 218.40,309.79 218.00,306.96 217.60,307.44 217.20,308.03 216.80,307.79 216.40,307.94 216.00,305.04 215.60,306.23 215.20,305.90 214.80,304.06 214.40,304.38 214.00,307.37 213.60,302.94 213.20,303.76 212.80,303.59 212.40,304.72 212.00,301.36 211.60,302.83 211.20,301.00 210.80,300.16 210.40,299.13 210.00,300.39 209.60,300.85 209.20,299.14 208.80,300.73 208.40,297.19 208.00,296.82 207.60,296.07 207.20,297.59 206.80,295.01 206.40,295.58 206.00,294.00 205.60,294.07 205.20,292.79 204.80,292.99 204.40,292.71 204.00,290.95 203.60,290.41 203.20,289.54 202.80,288.12 202.40,287.53 202.00,287.20 201.60,285.58 201.20,286.28 200.80,286.85 200.40,288.10 200.00,293.71 199.60,290.39 199.20,292.42 198.80,291.55 198.40,291.39 198.00,293.10 197.60,293.00 197.20,292.57 196.80,293.42 196.40,294.20 196.00,294.07 195.60,294.63 195.20,296.89 194.80,297.30 194.40,298.61 194.00,298.46 193.60,298.72 193.20,299.24 192.80,300.83 192.40,302.69 192.00,304.48 191.60,302.51 191.20,302.11 190.80,304.76 190.40,306.89 190.00,306.97 189.60,305.26 189.20,305.84 188.80,306.75 188.40,307.43 188.00,309.23 187.60,311.84 187.20,310.96 186.80,311.07 186.40,312.06 186.00,313.45 185.60,313.68 185.20,316.58 184.80,318.45 184.40,318.36 184.00,319.72 183.60,318.91 183.20,317.95 182.80,318.95 182.40,318.67 182.00,318.11 181.60,317.26 181.20,318.45 180.80,316.53 180.40,317.76 180.00,316.36 179.60,314.98 179.20,315.48 178.80,314.88 178.40,313.90 178.00,313.34 177.60,313.38 177.20,314.14 176.80,314.83 176.40,313.59 176.00,315.35 175.60,313.02 175.20,311.69 174.80,312.09 174.40,309.88 174.00,309.95 173.60,309.83 173.20,309.93 172.80,312.37 172.40,309.99 172.00,311.11 171.60,312.04 171.20,307.98 170.80,307.82 170.40,306.35 170.00,306.69 169.60,307.16 169.20,308.61 168.80,306.92 168.40,306.22 168.00,304.97 167.60,304.80 167.20,303.55 166.80,305.25 166.40,303.40 166.00,302.23 165.60,302.37 165.20,303.78 164.80,301.65 164.40,302.13 164.00,301.01 163.60,303.00 163.20,301.41 162.80,301.46 162.40,300.83 162.00,299.19 161.60,299.34 161.20,297.98 160.80,300.10 160.40,297.67 160.00,298.16 159.60,294.81 159.20,295.06 158.80,293.99 158.40,294.80 158.00,295.65 157.60,294.68 157.20,295.04 156.80,290.90 156.40,289.11 156.00,294.69 155.60,289.80 155.20,290.81 154.80,291.76 154.40,293.31 154.00,294.47 153.60,293.88 153.20,293.98 152.80,294.90 152.40,294.38 152.00,294.74 151.60,296.00 151.20,297.84 150.80,296.80 150.40,297.79 150.00,298.69 149.60,300.88 149.20,300.45 148.80,301.29 148.40,302.36 148.00,302.29 147.60,305.25 147.20,302.91 146.80,306.26 146.40,305.65 146.00,306.40 145.60,307.22 145.20,307.63 144.80,308.25 144.40,308.52 144.00,309.07 143.60,311.26 143.20,311.12 142.80,312.29 142.40,313.88 142.00,315.24 141.60,315.42 141.20,316.21 140.80,320.76 140.40,316.92 140.00,317.76 139.60,317.67 139.20,318.05 138.80,316.32 138.40,316.07 138.00,314.78 137.60,315.96 137.20,317.33 136.80,316.63 136.40,314.41 136.00,313.02 135.60,313.59 135.20,314.96 134.80,312.07 134.40,311.71 134.00,312.11 133.60,311.04 133.20,313.21 132.80,311.16 132.40,310.60 132.00,309.52 131.60,311.28 131.20,309.93 130.80,309.24 130.40,307.67 130.00,311.21 129.60,307.33 129.20,307.30 128.80,308.05 128.40,305.93 128.00,306.67 127.60,307.52 127.20,304.54 126.80,305.31 126.40,303.50 126.00,304.85 125.60,303.61 125.20,303.12 124.80,303.49 124.40,303.15 124.00,301.64 123.60,302.79 123.20,302.74 122.80,300.77 122.40,301.84 122.00,298.66 121.60,300.46 121.20,298.63 120.80,298.51 120.40,298.99 120.00,297.11 119.60,296.24 119.20,298.65 118.80,294.92 118.40,294.06 118.00,294.85 117.60,294.44 117.20,292.58 116.80,292.56 116.40,292.09 116.00,291.79 115.60,291.78 115.20,293.14 114.80,289.72 114.40,289.02 114.00,287.91 113.60,285.88 113.20,284.89 112.80,285.63 112.40,284.54 112.00,285.44 111.60,286.26 111.20,287.41 110.80,287.38 110.40,289.96 110.00,289.74 109.60,288.54 109.20,289.84 108.80,290.93 108.40,290.89 108.00,290.88 107.60,293.38 107.20,294.03 106.80,295.28 106.40,293.87 106.00,297.57 105.60,295.80 105.20,296.72 104.80,296.31 104.40,296.75 104.00,300.76 103.60,300.96 103.20,299.47 102.80,299.78 102.40,304.49 102.00,302.94 101.60,301.94 101.20,303.66 100.80,303.69 100.40,305.03 100.00,309.07 99.60,308.91 99.20,307.52 98.80,307.67 98.40,310.27 98.00,309.73 97.60,310.03 97.20,311.88 96.80,314.48 96.40,314.47 96.00,314.90 95.60,317.27 95.20,318.28 94.80,317.38 94.40,318.40 94.00,317.92 93.60,315.57 93.20,316.15 92.80,317.02 92.40,315.28 92.00,314.30 91.60,314.79 91.20,314.43 90.80,316.18 90.40,314.40 90.00,313.39 89.60,314.34 89.20,311.76 88.80,312.14 88.40,316.38 88.00,311.12 87.60,310.51 87.20,310.09 86.80,312.18 86.40,311.04 86.00,311.02 85.60,308.71 85.20,308.24 84.80,308.44 84.40,312.29 84.00,307.71 83.60,308.02 83.20,306.83 82.80,307.30 82.40,307.08 82.00,305.91 81.60,305.72 81.20,305.26 80.80,305.41 80.40,303.79 80.00,303.64 79.60,303.03 79.20,302.58 78.80,302.26 78.40,302.00 78.00,302.45 77.60,301.66 77.20,300.91 76.80,299.93 76.40,299.12 76.00,300.28 75.60,299.26 75.20,299.22 74.80,298.15 74.40,298.52 74.00,298.34 73.60,298.68 73.20,296.54 72.80,296.23 72.40,295.83 72.00,295.68 71.60,294.16 71.20,293.25 70.80,292.33 70.40,296.14 70.00,291.14 69.60,290.90 69.20,290.66 68.80,290.52 68.40,288.71 68.00,288.39 67.60,288.66 67.20,286.71 66.80,285.67 66.40,285.87 66.00,287.26 65.60,282.96 65.20,284.42 64.80,285.42 64.40,285.81 64.00,287.51 63.60,287.29 63.20,287.36 62.80,286.70 62.40,288.83 62.00,288.05 61.60,288.88 61.20,289.70 60.80,291.36 60.40,290.67 60.00,290.86 59.60,292.03 59.20,292.29 58.80,292.74 58.40,293.18 58.00,293.74 57.60,295.02 57.20,296.05 56.80,301.52 56.40,296.88 56.00,297.61 55.60,298.81 55.20,298.15 54.80,298.95 54.40,300.58 54.00,303.06 53.60,300.74 53.20,305.19 52.80,304.95 52.40,304.24 52.00,304.07 51.60,305.89 51.20,305.41 50.80,307.23 50.40,309.38 50.00,308.86 49.60,308.03 49.20,308.60 48.80,310.31 48.40,310.20 48.00,312.32 47.60,315.26 47.20,313.66 46.80,314.21 46.40,317.87 46.00,318.50 45.60,317.32 45.20,319.18 44.80,319.42 44.40,318.30 44.00,319.40 43.60,318.85 43.20,317.30 42.80,317.89 42.40,318.34 42.00,317.29 41.60,318.55 41.20,316.58 40.80,315.89 40.40,316.71 40.00,315.52 39.60,318.54 39.20,315.95 38.80,315.35 38.40,315.59 38.00,314.91 37.60,314.37 37.20,313.42 36.80,314.63 36.40,313.02 36.00,315.03 35.60,313.79 35.20,312.19 34.80,312.47 34.40,312.40 34.00,311.69 33.60,312.16 33.20,315.79 32.80,310.41 32.40,310.22 32.00,311.54 31.60,310.10 31.20,308.93 30.80,308.64 30.40,308.77 30.00,308.71 29.60,307.91 29.20,306.57 28.80,306.84 28.40,307.77 28.00,307.74 27.60,304.71 27.20,304.94 26.80,303.90 26.40,305.81 26.00,304.45 25.60,305.28 25.20,302.91 24.80,304.36 24.40,301.17 24.00,300.43 23.60,299.98 23.20,300.41 22.80,297.34 22.40,298.32 22.00,298.75 21.60,295.16 21.20,293.92 20.80,293.68 20.40,292.80 20.00,293.04 19.60,289.07 19.20,291.34 18.80,286.12 18.40,285.29" fill="#050505" stroke="#050505" stroke-width="0.3" stroke-linejoin="round"/></svg>
<svg style="left:0.00px;top:0.00px" width="650" height="407" viewBox="0 0 650 407"><path d="M153.3,69.5 V358" stroke="#222" stroke-width="0.9" stroke-dasharray="2.3 1.9" stroke-dashoffset="1"/><path d="M200.7,88.6 V359.8" stroke="#505050" stroke-width="0.85" stroke-dasharray="5.4 1.4"/><path d="M247.9,88.6 V359.8" stroke="#505050" stroke-width="0.85" stroke-dasharray="5.4 1.4"/><path d="M296.3,88.6 V359.8" stroke="#505050" stroke-width="0.85" stroke-dasharray="5.4 1.4"/><path d="M343.2,88.6 V359.8" stroke="#505050" stroke-width="0.85" stroke-dasharray="5.4 1.4"/><path d="M4,269.2 H529" stroke="#505050" stroke-width="0.85" stroke-dasharray="7.2 1.6"/><rect x="0" y="267.3" width="3.6" height="3.8" fill="#000"/><path d="M4,318.8 H529" stroke="#505050" stroke-width="0.85" stroke-dasharray="7.2 1.6"/><rect x="0" y="316.90000000000003" width="3.6" height="3.8" fill="#000"/><circle cx="153.3" cy="359.7" r="2.4" fill="#00787e"/><circle cx="342.8" cy="359.7" r="2.4" fill="#00787e"/></svg>
<div style="left:147.00px;top:365.20px;width:13.40px;height:8.90px;background:#ffffff;border:0.7px solid #8a8a8a;"></div>
<span style='left:148.74px;top:364.60px;font-size:6.40px;line-height:10px;color:#222;font-weight:400;font-family:"Liberation Sans", sans-serif;transform-origin:0 50%;transform:scaleX(0.810);'>360°</span>
<div style="left:193.50px;top:365.20px;width:13.90px;height:8.90px;background:#ffffff;border:0.7px solid #8a8a8a;"></div>
<span style='left:195.49px;top:364.60px;font-size:6.40px;line-height:10px;color:#222;font-weight:400;font-family:"Liberation Sans", sans-serif;transform-origin:0 50%;transform:scaleX(0.810);'>270°</span>
<div style="left:240.60px;top:365.20px;width:14.40px;height:8.90px;background:#ffffff;border:0.7px solid #8a8a8a;"></div>
<span style='left:242.84px;top:364.60px;font-size:6.40px;line-height:10px;color:#222;font-weight:400;font-family:"Liberation Sans", sans-serif;transform-origin:0 50%;transform:scaleX(0.810);'>180°</span>
<div style="left:288.60px;top:365.20px;width:13.90px;height:8.90px;background:#ffffff;border:0.7px solid #8a8a8a;"></div>
<span style='left:291.79px;top:364.60px;font-size:6.40px;line-height:10px;color:#222;font-weight:400;font-family:"Liberation Sans", sans-serif;transform-origin:0 50%;transform:scaleX(0.860);'>90°</span>
<div style="left:335.60px;top:365.20px;width:14.40px;height:8.90px;background:#ffffff;border:0.7px solid #8a8a8a;"></div>
<span style='left:340.45px;top:364.60px;font-size:6.40px;line-height:10px;color:#222;font-weight:400;font-family:"Liberation Sans", sans-serif;transform-origin:0 50%;transform:scaleX(0.900);'>0°</span>
<div style="left:190.80px;top:70.40px;width:154.50px;height:17.60px;background:#8e8e8e;"></div>
<div style="left:199.40px;top:79.30px;width:145.50px;height:7.60px;background:#ffffff;"></div>
<div style="left:193.70px;top:81.40px;width:3.30px;height:3.30px;background:#000;"></div>
<svg style="left:0.00px;top:0.00px" width="650" height="407" viewBox="0 0 650 407"><g stroke-width="0.7"><path d="M247.4,71.5 V79" stroke="#e8e8e8"/><path d="M297,71.5 V79" stroke="#e8e8e8"/><path d="M247.4,79.3 V86.9" stroke="#9a9a9a"/><path d="M297,79.3 V86.9" stroke="#9a9a9a"/></g></svg>
<span style='left:201.60px;top:70.00px;font-size:5.60px;line-height:10px;color:#e4e4e4;font-weight:400;font-family:"Liberation Sans", sans-serif;'>1</span>
<span style='left:250.20px;top:70.00px;font-size:5.60px;line-height:10px;color:#e4e4e4;font-weight:400;font-family:"Liberation Sans", sans-serif;'>2</span>
<span style='left:299.60px;top:70.00px;font-size:5.20px;line-height:10px;color:#e4e4e4;font-weight:400;font-family:"Liberation Sans", sans-serif;'>Δ</span>
<span style='left:202.00px;top:78.10px;font-size:6.00px;line-height:10px;color:#222;font-weight:400;font-family:"Liberation Sans", sans-serif;transform-origin:0 50%;transform:scaleX(0.934);'>44.13 A</span>
<span style='left:250.20px;top:78.10px;font-size:6.00px;line-height:10px;color:#222;font-weight:400;font-family:"Liberation Sans", sans-serif;transform-origin:0 50%;transform:scaleX(0.894);'>174.2 A</span>
<span style='left:299.40px;top:78.10px;font-size:6.00px;line-height:10px;color:#222;font-weight:400;font-family:"Liberation Sans", sans-serif;transform-origin:0 50%;transform:scaleX(0.884);'>130.1 A</span>
<svg style="left:0.00px;top:0.00px" width="650" height="407" viewBox="0 0 650 407"><path d="M331.6,76.6 H334.6" stroke="#fff" stroke-width="1"/><path d="M339.6,72.8 L343.2,76.6 M343.2,72.8 L339.6,76.6" stroke="#fff" stroke-width="0.9"/><rect x="341.6" y="83" width="2.2" height="1.8" fill="#9a9a9a"/><path d="M342,83 V82.2 C342,81.4 343.4,81.4 343.4,82.2 V83" fill="none" stroke="#9a9a9a" stroke-width="0.4"/></svg>
<div style="left:0.00px;top:380.00px;width:536.80px;height:23.40px;background:#9b9b9b;"></div>
<div style="left:6.60px;top:387.80px;width:530.20px;height:7.60px;background:#5b92c8;"></div>
<div style="left:6.60px;top:395.40px;width:530.20px;height:7.80px;background:#ffffff;"></div>
<div style="left:1.50px;top:390.00px;width:3.00px;height:2.90px;background:#000;"></div>
<div style="left:1.50px;top:398.00px;width:3.00px;height:2.90px;background:#000;"></div>
<svg style="left:0.00px;top:0.00px" width="650" height="407" viewBox="0 0 650 407"><g stroke-width="0.7"><path d="M41.8,380.6 V387.4" stroke="#e6e6e6"/><path d="M41.8,387.6 V395.6" stroke="#86add6"/><path d="M41.8,395.6 V403.6" stroke="#a8a8a8"/><path d="M72.2,380.6 V387.4" stroke="#e6e6e6"/><path d="M72.2,387.6 V395.6" stroke="#86add6"/><path d="M72.2,395.6 V403.6" stroke="#a8a8a8"/><path d="M100.6,380.6 V387.4" stroke="#e6e6e6"/><path d="M100.6,387.6 V395.6" stroke="#86add6"/><path d="M100.6,395.6 V403.6" stroke="#a8a8a8"/><path d="M128.3,380.6 V387.4" stroke="#e6e6e6"/><path d="M128.3,387.6 V395.6" stroke="#86add6"/><path d="M128.3,395.6 V403.6" stroke="#a8a8a8"/><path d="M154.2,380.6 V387.4" stroke="#e6e6e6"/><path d="M154.2,387.6 V395.6" stroke="#86add6"/><path d="M154.2,395.6 V403.6" stroke="#a8a8a8"/><path d="M189.3,380.6 V387.4" stroke="#e6e6e6"/><path d="M189.3,387.6 V395.6" stroke="#86add6"/><path d="M189.3,395.6 V403.6" stroke="#a8a8a8"/><path d="M216.9,380.6 V387.4" stroke="#e6e6e6"/><path d="M216.9,387.6 V395.6" stroke="#86add6"/><path d="M216.9,395.6 V403.6" stroke="#a8a8a8"/><path d="M268.5,380.6 V387.4" stroke="#e6e6e6"/><path d="M268.5,387.6 V395.6" stroke="#86add6"/><path d="M268.5,395.6 V403.6" stroke="#a8a8a8"/></g><path d="M530,384.2 H533" stroke="#fff" stroke-width="1"/></svg>
<span style='left:10.20px;top:379.00px;font-size:6.00px;line-height:10px;color:#ececec;font-weight:400;font-family:"Liberation Sans", sans-serif;transform-origin:0 50%;transform:scaleX(0.877);'>Channel</span>
<span style='left:44.60px;top:379.00px;font-size:6.00px;line-height:10px;color:#ececec;font-weight:400;font-family:"Liberation Sans", sans-serif;transform-origin:0 50%;transform:scaleX(0.812);'>Name</span>
<span style='left:75.00px;top:379.00px;font-size:6.00px;line-height:10px;color:#ececec;font-weight:400;font-family:"Liberation Sans", sans-serif;transform-origin:0 50%;transform:scaleX(0.899);'>Value</span>
<span style='left:103.20px;top:379.00px;font-size:6.00px;line-height:10px;color:#ececec;font-weight:400;font-family:"Liberation Sans", sans-serif;transform-origin:0 50%;transform:scaleX(0.827);'>Min</span>
<span style='left:131.00px;top:379.00px;font-size:6.00px;line-height:10px;color:#ececec;font-weight:400;font-family:"Liberation Sans", sans-serif;transform-origin:0 50%;transform:scaleX(0.794);'>Max</span>
<span style='left:157.00px;top:379.00px;font-size:6.00px;line-height:10px;color:#ececec;font-weight:400;font-family:"Liberation Sans", sans-serif;transform-origin:0 50%;transform:scaleX(0.917);'>Average</span>
<span style='left:192.40px;top:379.00px;font-size:5.60px;line-height:10px;color:#ececec;font-weight:400;font-family:"Liberation Sans", sans-serif;'>σ</span>
<span style='left:219.40px;top:379.00px;font-size:6.00px;line-height:10px;color:#ececec;font-weight:400;font-family:"Liberation Sans", sans-serif;transform-origin:0 50%;transform:scaleX(0.938);'>Capture Count</span>
<span style='left:271.20px;top:379.00px;font-size:6.00px;line-height:10px;color:#ececec;font-weight:400;font-family:"Liberation Sans", sans-serif;transform-origin:0 50%;transform:scaleX(0.814);'>Span</span>
<span style='left:8.60px;top:386.60px;font-size:5.50px;line-height:10px;color:#ffffff;font-weight:400;font-family:"Liberation Sans", sans-serif;'>A</span>
<span style='left:44.20px;top:386.60px;font-size:6.00px;line-height:10px;color:#ffffff;font-weight:400;font-family:"Liberation Sans", sans-serif;transform-origin:0 50%;transform:scaleX(0.885);'>Maximum</span>
<span style='left:74.80px;top:386.60px;font-size:6.00px;line-height:10px;color:#ffffff;font-weight:400;font-family:"Liberation Sans", sans-serif;transform-origin:0 50%;transform:scaleX(0.845);'>178.5 A</span>
<span style='left:103.00px;top:386.60px;font-size:6.00px;line-height:10px;color:#ffffff;font-weight:400;font-family:"Liberation Sans", sans-serif;transform-origin:0 50%;transform:scaleX(0.845);'>178.5 A</span>
<span style='left:130.80px;top:386.60px;font-size:6.00px;line-height:10px;color:#ffffff;font-weight:400;font-family:"Liberation Sans", sans-serif;transform-origin:0 50%;transform:scaleX(0.845);'>178.5 A</span>
<span style='left:156.80px;top:386.60px;font-size:6.00px;line-height:10px;color:#ffffff;font-weight:400;font-family:"Liberation Sans", sans-serif;transform-origin:0 50%;transform:scaleX(0.845);'>178.5 A</span>
<span style='left:192.20px;top:386.60px;font-size:6.00px;line-height:10px;color:#ffffff;font-weight:400;font-family:"Liberation Sans", sans-serif;transform-origin:0 50%;transform:scaleX(0.853);'>0 A</span>
<span style='left:219.20px;top:386.60px;font-size:5.50px;line-height:10px;color:#ffffff;font-weight:400;font-family:"Liberation Sans", sans-serif;'>1</span>
<span style='left:270.80px;top:386.60px;font-size:6.00px;line-height:10px;color:#ffffff;font-weight:400;font-family:"Liberation Sans", sans-serif;transform-origin:0 50%;transform:scaleX(0.900);'>Whole trace</span>
<span style='left:8.60px;top:394.40px;font-size:5.50px;line-height:10px;color:#222;font-weight:400;font-family:"Liberation Sans", sans-serif;'>A</span>
<span style='left:44.20px;top:394.40px;font-size:6.00px;line-height:10px;color:#222;font-weight:400;font-family:"Liberation Sans", sans-serif;transform-origin:0 50%;transform:scaleX(0.904);'>Minimum</span>
<span style='left:74.80px;top:394.40px;font-size:6.00px;line-height:10px;color:#222;font-weight:400;font-family:"Liberation Sans", sans-serif;transform-origin:0 50%;transform:scaleX(0.845);'>38.76 A</span>
<span style='left:103.00px;top:394.40px;font-size:6.00px;line-height:10px;color:#222;font-weight:400;font-family:"Liberation Sans", sans-serif;transform-origin:0 50%;transform:scaleX(0.845);'>38.76 A</span>
<span style='left:130.80px;top:394.40px;font-size:6.00px;line-height:10px;color:#222;font-weight:400;font-family:"Liberation Sans", sans-serif;transform-origin:0 50%;transform:scaleX(0.845);'>38.76 A</span>
<span style='left:156.80px;top:394.40px;font-size:6.00px;line-height:10px;color:#222;font-weight:400;font-family:"Liberation Sans", sans-serif;transform-origin:0 50%;transform:scaleX(0.845);'>38.76 A</span>
<span style='left:192.20px;top:394.40px;font-size:6.00px;line-height:10px;color:#222;font-weight:400;font-family:"Liberation Sans", sans-serif;transform-origin:0 50%;transform:scaleX(0.853);'>0 A</span>
<span style='left:219.20px;top:394.40px;font-size:5.50px;line-height:10px;color:#222;font-weight:400;font-family:"Liberation Sans", sans-serif;'>1</span>
<span style='left:270.80px;top:394.40px;font-size:6.00px;line-height:10px;color:#222;font-weight:400;font-family:"Liberation Sans", sans-serif;transform-origin:0 50%;transform:scaleX(0.900);'>Whole trace</span>
<div style="left:0.00px;top:403.20px;width:536.80px;height:0.90px;background:#a2a2a2;"></div>
<div style="left:0.00px;top:404.10px;width:536.80px;height:0.80px;background:#ffffff;"></div>
<div style="left:0.00px;top:404.90px;width:538.50px;height:1.10px;background:#3c3c3c;"></div>
<div style="left:0.00px;top:406.00px;width:538.50px;height:1.00px;background:#b4b4b4;"></div>
<div style="left:538.50px;top:69.00px;width:111.50px;height:336.00px;background:#ffffff;"></div>
<div style="left:538.50px;top:404.90px;width:111.50px;height:2.10px;background:#d2d2d2;"></div>
<div style="left:648.20px;top:79.40px;width:1.80px;height:325.50px;background:#e2e2e2;"></div>
<div style="left:538.50px;top:69.00px;width:111.50px;height:10.40px;background:#3e507e;"></div>
<span style='left:542.00px;top:69.50px;font-size:6.00px;line-height:10px;color:#ffffff;font-weight:700;font-family:"Liberation Sans", sans-serif;transform-origin:0 50%;transform:scaleX(0.957);'>Properties</span>
<svg style="left:0.00px;top:0.00px" width="650" height="407" viewBox="0 0 650 407"><path d="M642.4,72.4 L646,76.2 M646,72.4 L642.4,76.2" stroke="#fff" stroke-width="1.1"/></svg>
<span style='left:542.40px;top:82.20px;font-size:5.80px;line-height:10px;color:#3d3d3d;font-weight:400;font-family:"Liberation Sans", sans-serif;transform-origin:0 50%;transform:scaleX(0.930);'>Sample interval</span>
<span style='left:627.30px;top:82.20px;font-size:5.80px;line-height:10px;color:#3d3d3d;font-weight:400;font-family:"Liberation Sans", sans-serif;transform-origin:0 50%;transform:scaleX(0.930);'>2 µs</span>
<span style='left:542.40px;top:92.00px;font-size:5.80px;line-height:10px;color:#3d3d3d;font-weight:400;font-family:"Liberation Sans", sans-serif;transform-origin:0 50%;transform:scaleX(0.930);'>Sample rate</span>
<span style='left:616.61px;top:92.00px;font-size:5.80px;line-height:10px;color:#3d3d3d;font-weight:400;font-family:"Liberation Sans", sans-serif;transform-origin:0 50%;transform:scaleX(0.930);'>500 kS/s</span>
<span style='left:542.40px;top:101.90px;font-size:5.80px;line-height:10px;color:#3d3d3d;font-weight:400;font-family:"Liberation Sans", sans-serif;transform-origin:0 50%;transform:scaleX(0.930);'>No. samples</span>
<span style='left:613.60px;top:101.90px;font-size:5.80px;line-height:10px;color:#3d3d3d;font-weight:400;font-family:"Liberation Sans", sans-serif;transform-origin:0 50%;transform:scaleX(0.930);'>1,000,000</span>
<div style="left:541.00px;top:115.40px;width:98.40px;height:40.10px;background:transparent;border:0.7px solid #555;"></div>
<span style='left:544.20px;top:115.60px;font-size:5.80px;line-height:10px;color:#3d3d3d;font-weight:400;font-family:"Liberation Sans", sans-serif;transform-origin:0 50%;transform:scaleX(0.930);'>Channel</span>
<span style='left:632.00px;top:115.60px;font-size:5.80px;line-height:10px;color:#3d3d3d;font-weight:400;font-family:"Liberation Sans", sans-serif;transform-origin:0 50%;transform:scaleX(0.930);'>A</span>
<span style='left:544.20px;top:125.40px;font-size:5.80px;line-height:10px;color:#3d3d3d;font-weight:400;font-family:"Liberation Sans", sans-serif;transform-origin:0 50%;transform:scaleX(0.930);'>Range</span>
<span style='left:605.01px;top:125.40px;font-size:5.80px;line-height:10px;color:#3d3d3d;font-weight:400;font-family:"Liberation Sans", sans-serif;transform-origin:0 50%;transform:scaleX(0.930);'>-100 .. 650 A</span>
<span style='left:544.20px;top:135.20px;font-size:5.80px;line-height:10px;color:#3d3d3d;font-weight:400;font-family:"Liberation Sans", sans-serif;transform-origin:0 50%;transform:scaleX(0.930);'>Coupling</span>
<span style='left:627.81px;top:135.20px;font-size:5.80px;line-height:10px;color:#3d3d3d;font-weight:400;font-family:"Liberation Sans", sans-serif;transform-origin:0 50%;transform:scaleX(0.930);'>DC</span>
<span style='left:544.20px;top:145.00px;font-size:5.80px;line-height:10px;color:#3d3d3d;font-weight:400;font-family:"Liberation Sans", sans-serif;transform-origin:0 50%;transform:scaleX(0.930);'>Res. enhancement</span>
<span style='left:615.21px;top:145.00px;font-size:5.80px;line-height:10px;color:#3d3d3d;font-weight:400;font-family:"Liberation Sans", sans-serif;transform-origin:0 50%;transform:scaleX(0.930);'>12.0 bits</span>
<span style='left:542.40px;top:181.00px;font-size:5.80px;line-height:10px;color:#3d3d3d;font-weight:400;font-family:"Liberation Sans", sans-serif;transform-origin:0 50%;transform:scaleX(0.930);'>Capture Date</span>
<span style='left:613.60px;top:181.00px;font-size:5.80px;line-height:10px;color:#3d3d3d;font-weight:400;font-family:"Liberation Sans", sans-serif;transform-origin:0 50%;transform:scaleX(0.930);'>3/10/2021</span>
<span style='left:542.40px;top:190.90px;font-size:5.80px;line-height:10px;color:#3d3d3d;font-weight:400;font-family:"Liberation Sans", sans-serif;transform-origin:0 50%;transform:scaleX(0.930);'>Capture Time</span>
<span style='left:610.01px;top:190.90px;font-size:5.80px;line-height:10px;color:#3d3d3d;font-weight:400;font-family:"Liberation Sans", sans-serif;transform-origin:0 50%;transform:scaleX(0.930);'>4:40:18 PM</span>
<span style='left:542.40px;top:200.60px;font-size:5.80px;line-height:10px;color:#3d3d3d;font-weight:400;font-family:"Liberation Sans", sans-serif;transform-origin:0 50%;transform:scaleX(0.930);'>Saved with</span>
<span style='left:573.70px;top:209.80px;font-size:5.80px;line-height:10px;color:#3d3d3d;font-weight:400;font-family:"Liberation Sans", sans-serif;transform-origin:0 50%;transform:scaleX(0.890);'>PicoScope 6 - 6.14.23.5207</span>
<span style='left:594.52px;top:219.20px;font-size:5.80px;line-height:10px;color:#3d3d3d;font-weight:400;font-family:"Liberation Sans", sans-serif;transform-origin:0 50%;transform:scaleX(0.930);'>PicoScope 2204A</span>
<span style='left:610.41px;top:228.80px;font-size:5.80px;line-height:10px;color:#3d3d3d;font-weight:400;font-family:"Liberation Sans", sans-serif;transform-origin:0 50%;transform:scaleX(0.930);'>HX588/213</span>
</div></body></html>
